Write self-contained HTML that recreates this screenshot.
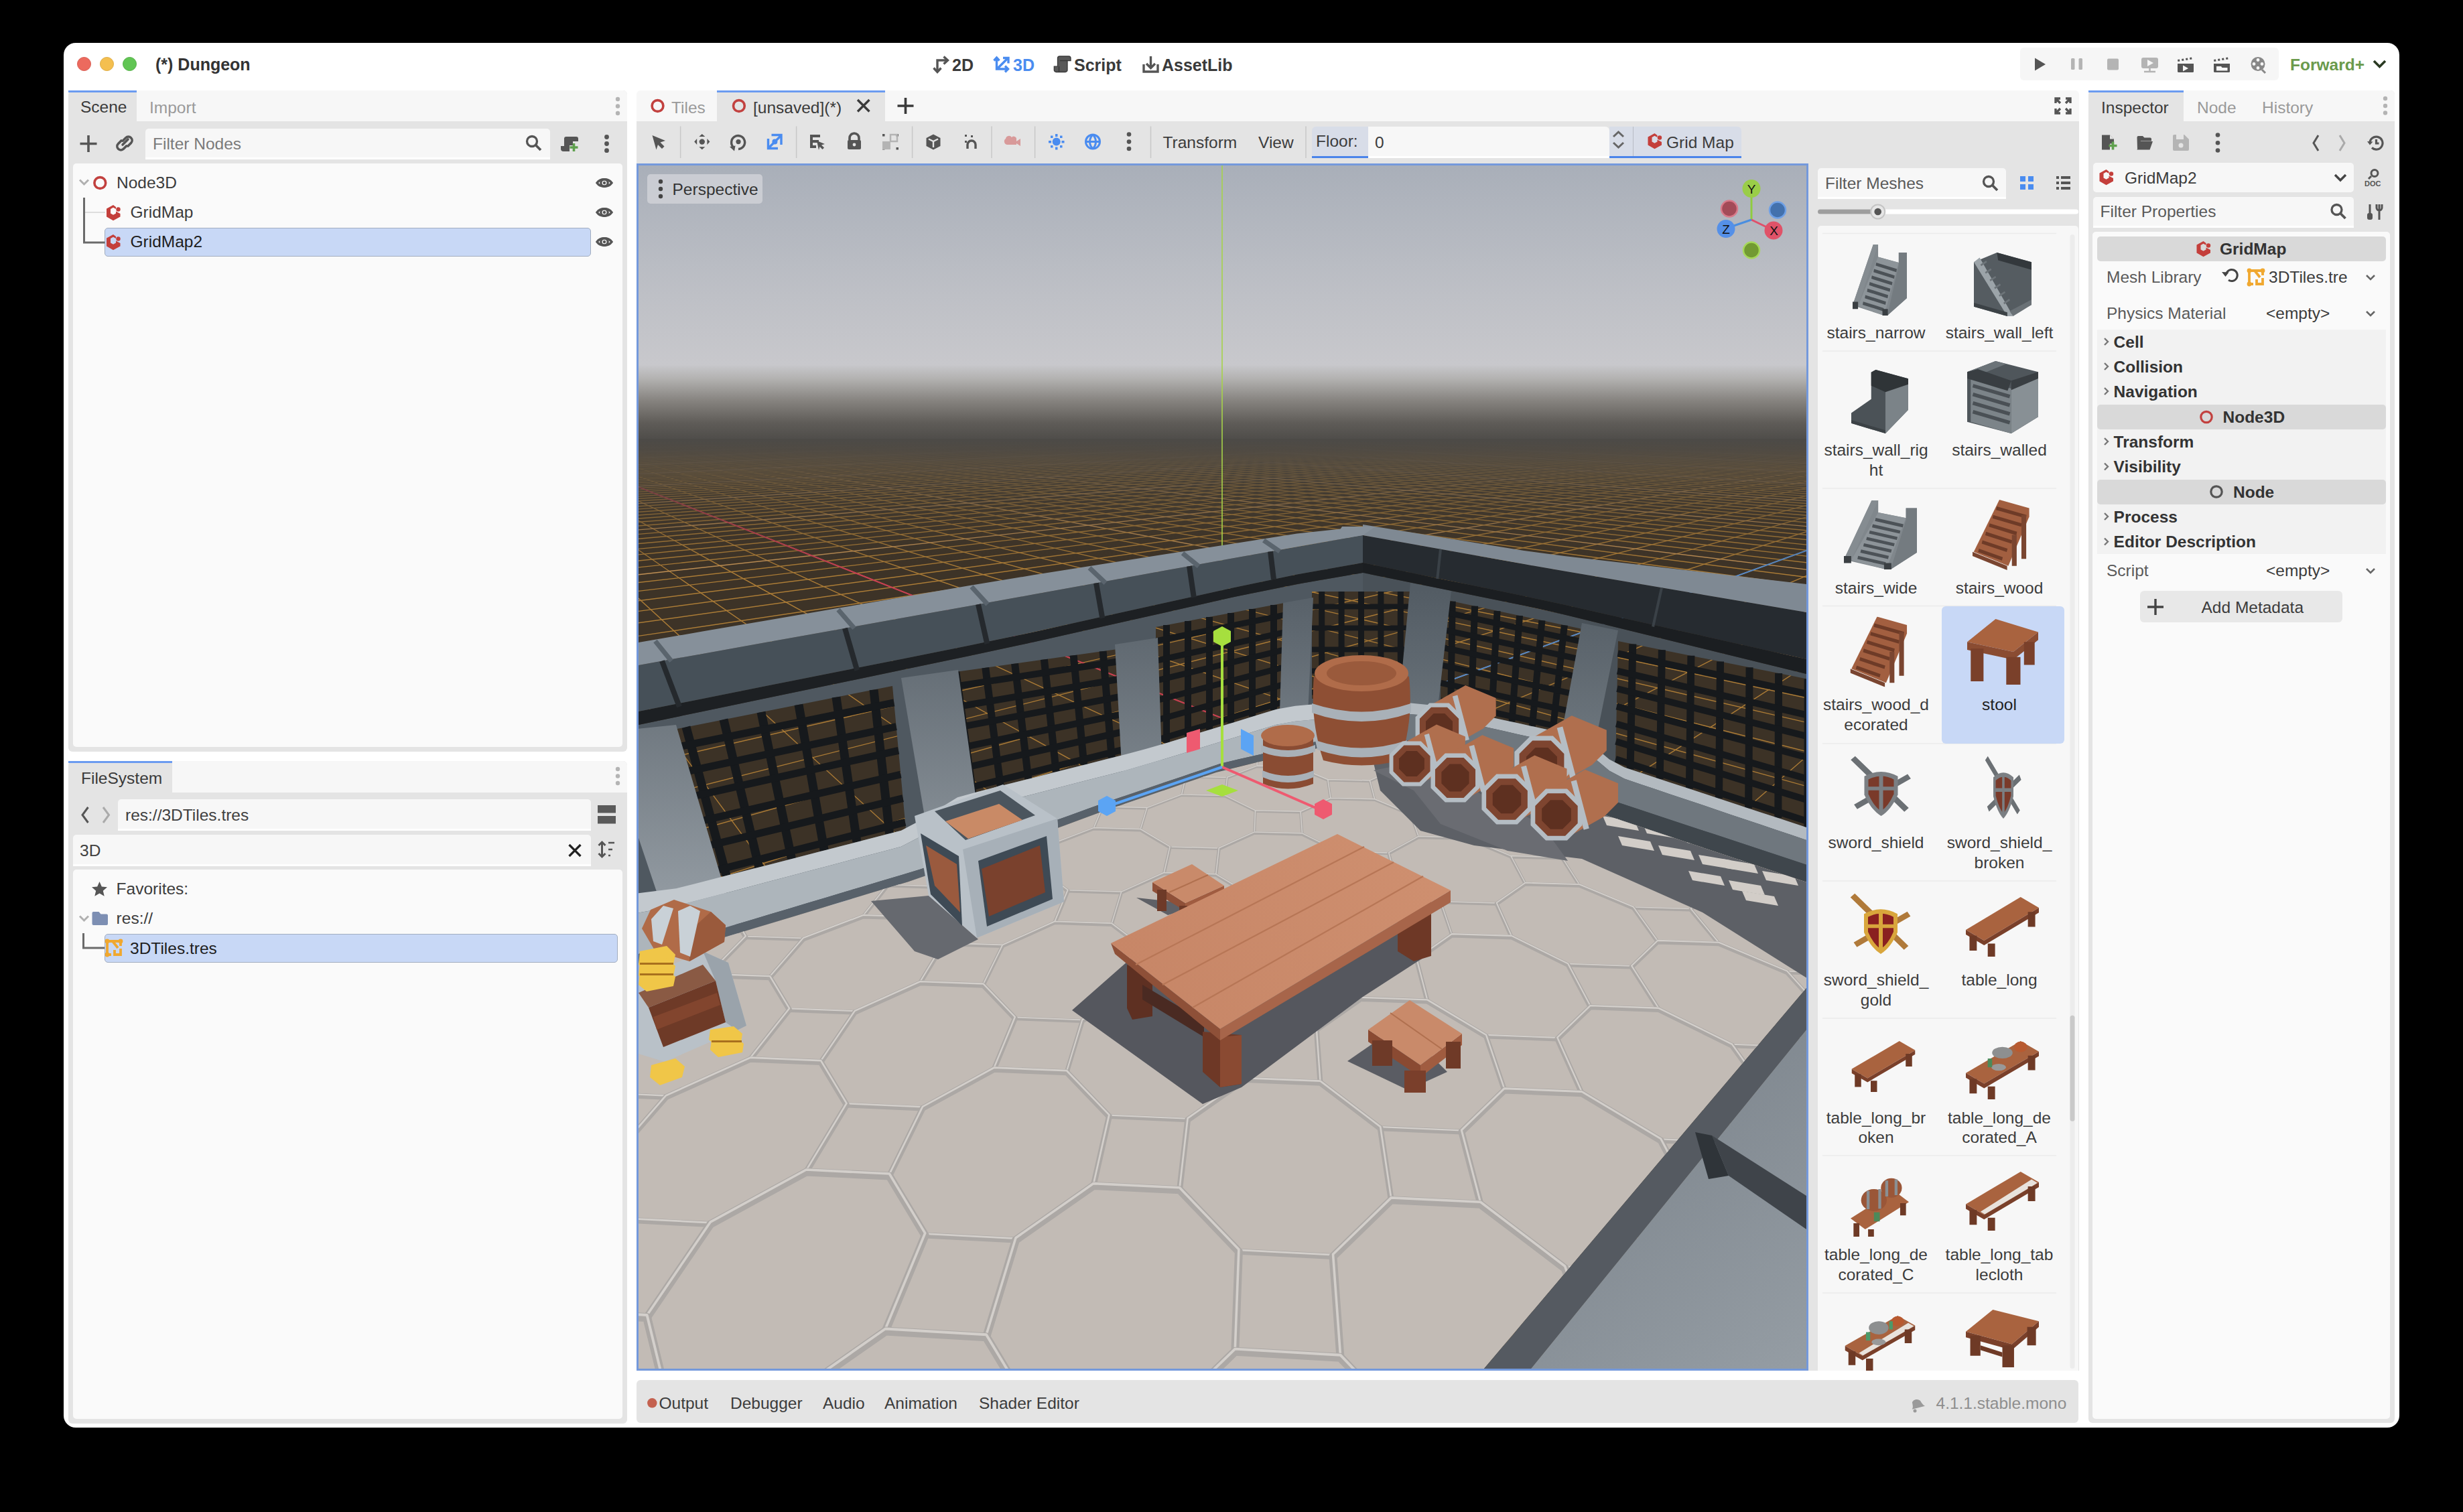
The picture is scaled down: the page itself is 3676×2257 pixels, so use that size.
<!DOCTYPE html>
<html><head><meta charset="utf-8">
<style>
*{box-sizing:border-box;margin:0;padding:0}
html,body{width:3676px;height:2257px;overflow:hidden;background:#000}
body{position:relative;font-family:"Liberation Sans",sans-serif;font-size:24.5px;color:#404040}
.a{position:absolute}
.t{position:absolute;white-space:nowrap;line-height:1}
.b{font-weight:700}
.g{color:#9a9a9a}
svg{position:absolute;overflow:visible}
</style></head><body>
<!-- window -->
<div class="a" style="left:95px;top:64px;width:3486px;height:2067px;background:#fff;border-radius:18px"></div>
<!-- traffic lights -->
<div class="a" style="left:115px;top:84.5px;width:21px;height:21px;border-radius:50%;background:#ec6a5e;border:1px solid #d85a4f"></div>
<div class="a" style="left:149px;top:84.5px;width:21px;height:21px;border-radius:50%;background:#f4bf4f;border:1px solid #deaa3f"></div>
<div class="a" style="left:183px;top:84.5px;width:21px;height:21px;border-radius:50%;background:#61c554;border:1px solid #52b045"></div>
<div class="t b" style="left:232px;top:84px;font-size:25px;color:#333">(*) Dungeon</div>


<!-- title bar center -->
<svg style="left:0;top:0" width="1" height="1">
 <g fill="none" stroke="#555" stroke-width="3.4"><path d="M1399 107V90h14"/><path d="M1393.5 101.5l5.5 6 5.5-6M1408.5 84.5l6 5.5-6 5.5"/></g>
 <g fill="none" stroke="#4a8cf0" stroke-width="3.4"><path d="M1487.5 86v17h17M1488 103l16-16"/><path d="M1483.5 90.5l4-4.5 4 4.5M1500 98.5l4.5 4.5-4.5 4.5M1497 86.5h8v8"/></g>
 <path d="M1583 84h12a3 3 0 0 1 3 3v3.6h-5v13.9a3 3 0 0 1-3 3h-13.7a3 3 0 0 1-3-3v-5.3h5.2V87a3 3 0 0 1 3-3z" fill="#585858" stroke="#383838" stroke-width="1.3"/><path d="M1580.5 99.2v8.3M1582 90.6h10.9" stroke="#383838" stroke-width="1.5"/>
 <g fill="none" stroke="#555" stroke-width="3.4"><path d="M1707 96v11h21V96M1717.5 84v17M1711 95l6.5 6.5 6.5-6.5"/></g>
</svg>
<div class="t b" style="left:1421px;top:85px;font-size:25px;color:#3a3a3a">2D</div>
<div class="t b" style="left:1512px;top:85px;font-size:25px;color:#4a8cf0">3D</div>
<div class="t b" style="left:1603px;top:85px;font-size:25px;color:#3a3a3a">Script</div>
<div class="t b" style="left:1734px;top:85px;font-size:25px;color:#3a3a3a">AssetLib</div>
<!-- run bar -->
<div class="a" style="left:3015px;top:71px;width:386px;height:49px;background:#f6f6f6;border-radius:6px"></div>
<svg style="left:0;top:0" width="1" height="1">
 <path d="M3037 86.5l16 9.5-16 9.5z" fill="#555"/>
 <rect x="3091" y="87" width="5.5" height="17" rx="1.5" fill="#b4b4b4"/><rect x="3102.5" y="87" width="5.5" height="17" rx="1.5" fill="#b4b4b4"/>
 <rect x="3145" y="87.5" width="17" height="17" rx="2" fill="#b4b4b4"/>
 <path d="M3199 86h19a3 3 0 0 1 3 3v10a3 3 0 0 1-3 3h-19a3 3 0 0 1-3-3v-10a3 3 0 0 1 3-3z" fill="#b4b4b4"/><path d="M3205 89l9 5-9 5z" fill="#f6f6f6"/><path d="M3208.5 102v4M3200 107h17" stroke="#b4b4b4" stroke-width="2.5"/>
 <g fill="#555"><path d="M3250 95h24v11.5a1.5 1.5 0 0 1-1.5 1.5h-21a1.5 1.5 0 0 1-1.5-1.5z"/><path d="M3250 89l3-.5.5 3-3 .5zM3256 88l3-.5.5 3-3 .5zM3262 87l3-.5.5 3-3 .5zM3268 86l3-.5.5 3-3 .5z"/></g><path d="M3258 97.5l8 4.5-8 4.5z" fill="#f6f6f6"/>
 <g fill="#555"><path d="M3304 95h24v11.5a1.5 1.5 0 0 1-1.5 1.5h-21a1.5 1.5 0 0 1-1.5-1.5z"/><path d="M3304 89l3-.5.5 3-3 .5zM3310 88l3-.5.5 3-3 .5zM3316 87l3-.5.5 3-3 .5zM3322 86l3-.5.5 3-3 .5z"/></g><path d="M3308 99h7l1.5 2h8v4.5h-16.5z" fill="#f6f6f6"/>
 <circle cx="3370" cy="95.5" r="10.5" fill="#888"/><g fill="#f6f6f6"><circle cx="3370" cy="89.5" r="2.4"/><circle cx="3376" cy="95.5" r="2.4"/><circle cx="3370" cy="101.5" r="2.4"/><circle cx="3364" cy="95.5" r="2.4"/></g><path d="M3376 104l5 5" stroke="#888" stroke-width="3"/>
 <path d="M3543 91l8.5 8.5 8.5-8.5" fill="none" stroke="#2a3a22" stroke-width="3.6"/>
</svg>
<div class="t b" style="left:3418px;top:85px;font-size:24.5px;color:#6a9a4c">Forward+</div>

<!-- ===== LEFT DOCK: Scene ===== -->
<div class="a" style="left:102px;top:135px;width:834px;height:987px;background:#e4e4e4;border-radius:6px"></div>
<div class="a" style="left:204px;top:135px;width:732px;height:46px;background:#f7f7f7;border-radius:0 6px 0 0"></div>
<div class="a" style="left:102px;top:135px;width:102px;height:3px;background:#6b9bf0"></div>
<div class="t" style="left:120px;top:148px;color:#3a3a3a">Scene</div>
<div class="t g" style="left:223px;top:149px">Import</div>
<!-- tree -->
<div class="a" style="left:109px;top:244px;width:820px;height:871px;background:#fafafa;border-radius:5px"></div>
<!-- filter -->
<div class="a" style="left:217px;top:192px;width:604px;height:46px;background:#f7f7f7;border-radius:5px 5px 0 0;border-bottom:3px solid #fff"></div>
<div class="t g" style="left:228px;top:203px;color:#7a7a7a">Filter Nodes</div>

<!-- ===== LEFT DOCK: FileSystem ===== -->
<div class="a" style="left:102px;top:1136px;width:834px;height:989px;background:#e4e4e4;border-radius:6px"></div>
<div class="a" style="left:257px;top:1136px;width:679px;height:47px;background:#f7f7f7;border-radius:0 6px 0 0"></div>
<div class="a" style="left:102px;top:1136px;width:155px;height:3px;background:#6b9bf0"></div>
<div class="t" style="left:121px;top:1150px;color:#3a3a3a">FileSystem</div>
<div class="a" style="left:176px;top:1193px;width:706px;height:47px;background:#f7f7f7;border-radius:5px 5px 0 0;border-bottom:3px solid #fff"></div>
<div class="t" style="left:187px;top:1205px">res://3DTiles.tres</div>
<div class="a" style="left:109px;top:1246px;width:773px;height:47px;background:#f7f7f7;border-radius:5px 5px 0 0;border-bottom:3px solid #fff"></div>
<div class="t" style="left:119px;top:1258px">3D</div>
<div class="a" style="left:109px;top:1298px;width:820px;height:820px;background:#fafafa;border-radius:5px"></div>


<!-- scene toolbar icons -->
<svg style="left:0;top:0" width="1" height="1">
 <g fill="none" stroke="#555" stroke-width="3.6"><path d="M132 202v25M119.5 214.5h25"/></g>
 <g fill="none" stroke="#555" stroke-width="3.6" stroke-linecap="round"><path d="M181 210l-4.5 4.5a5.5 5.5 0 0 0 7.8 7.8l4.5-4.5M191 218l4.5-4.5a5.5 5.5 0 0 0-7.8-7.8l-4.5 4.5M183 216l8-8"/></g>
 <g fill="none" stroke="#555" stroke-width="3.3"><circle cx="794" cy="211" r="7.5"/><path d="M799.5 216.5l7.5 7.5" stroke-width="3.8"/></g>
 <path d="M845 204h15a3 3 0 0 1 3 3v4h-8v6h-5v9h-9a4 4 0 0 1-4-4v-4h5v-11a3 3 0 0 1 3-3z" fill="#555"/>
 <path d="M856.5 214v12M850.5 220h12" stroke="#5fa04e" stroke-width="3.6"/>
 <g fill="#555"><circle cx="905.5" cy="204.5" r="3.4"/><circle cx="905.5" cy="214.5" r="3.4"/><circle cx="905.5" cy="224.7" r="3.4"/></g>
 <g fill="#b4b4b4"><circle cx="922" cy="148" r="3.2"/><circle cx="922" cy="158.5" r="3.2"/><circle cx="922" cy="169" r="3.2"/></g>
</svg>
<!-- tree rows -->
<div class="a" style="left:156px;top:339.5px;width:725.5px;height:43.5px;background:#c8d8f6;border:1px solid #a2adbf;border-radius:5px"></div>
<svg style="left:0;top:0" width="1" height="1">
 <path d="M119 268.5l6.5 6.5 6.5-6.5" fill="none" stroke="#b0b0b0" stroke-width="3"/>
 <circle cx="149.3" cy="273" r="8.4" fill="none" stroke="#c2413f" stroke-width="3.6"/>
 <path d="M125.5 295v67h31" fill="none" stroke="#6a6a6a" stroke-width="3"/>
 <path d="M127 317h30" fill="none" stroke="#dedede" stroke-width="2"/>
 <g id="gm"><path d="M169 306l-10 5.5v12l10 5.8 10.5-5.8v-4.5l-6.5-3.5v3l-4 2.3-4-2.3v-6.5l4-2.3 4 2.3v-3z" fill="#c43f3b"/><circle cx="176.5" cy="312.5" r="3.2" fill="#c43f3b"/></g>
 <use href="#gm" y="44"/>
 <g fill="none" stroke="#555" stroke-width="3.4"><path d="M891 273c5-7 17-7 22 0c-5 7-17 7-22 0z" /><circle cx="902" cy="273" r="5.2"/></g>
 <circle cx="902" cy="273" r="2.2" fill="#555"/>
 <g fill="none" stroke="#555" stroke-width="3.4"><path d="M891 317c5-7 17-7 22 0c-5 7-17 7-22 0z" /><circle cx="902" cy="317" r="5.2"/></g>
 <circle cx="902" cy="317" r="2.2" fill="#555"/>
 <g fill="none" stroke="#555" stroke-width="3.4"><path d="M891 361c5-7 17-7 22 0c-5 7-17 7-22 0z" /><circle cx="902" cy="361" r="5.2"/></g>
 <circle cx="902" cy="361" r="2.2" fill="#555"/>
</svg>
<div class="t" style="left:174px;top:261px;color:#3c3c3c">Node3D</div>
<div class="t" style="left:194.5px;top:305px;color:#3c3c3c">GridMap</div>
<div class="t" style="left:194.5px;top:349px;color:#1e1e1e">GridMap2</div>
<!-- filesystem -->
<svg style="left:0;top:0" width="1" height="1">
 <path d="M131.5 1205l-8.5 11.5 8.5 11.5" fill="none" stroke="#555" stroke-width="3"/>
 <path d="M154 1205l8.5 11.5-8.5 11.5" fill="none" stroke="#aaa" stroke-width="3"/>
 <rect x="892" y="1202" width="27" height="11.5" fill="#5a5a5a"/><rect x="892" y="1218" width="27" height="11.5" fill="#5a5a5a"/>
 <path d="M849.5 1261l17 17M866.5 1261l-17 17" stroke="#222" stroke-width="3.3"/>
 <path d="M898.5 1257v22M893.5 1262l5-5 5 5M893.5 1274l5 5 5-5" fill="none" stroke="#555" stroke-width="3"/>
 <path d="M908 1258h9M908 1268h6M908 1277h3" stroke="#555" stroke-width="2.6"/>
 <path d="M148.5 1316l3.3 7.6 8.2.7-6.2 5.4 1.9 8-7.2-4.3-7.2 4.3 1.9-8-6.2-5.4 8.2-.7z" fill="#555"/>
 <path d="M119 1367.5l6.5 6.5 6.5-6.5" fill="none" stroke="#b0b0b0" stroke-width="3"/>
 <path d="M137.5 1363a2 2 0 0 1 2-2h8l3 3.5h8.5a2 2 0 0 1 2 2v12.5a2 2 0 0 1-2 2h-19.5a2 2 0 0 1-2-2z" fill="#7d8fb3"/>
 <path d="M124.5 1393v22h32" fill="none" stroke="#6a6a6a" stroke-width="3"/>
 <g fill="#922" ></g>
</svg>
<div class="a" style="left:156.4px;top:1393.5px;width:766px;height:43px;background:#c8d8f6;border:1px solid #a2adbf;border-radius:5px"></div>
<svg style="left:0;top:0" width="1" height="1">
 <g id="resicon"><path d="M160 1405h20M160 1405v20M160 1425h6M180 1405v7M168 1405l8 10M171 1418v7h9v-9" fill="none" stroke="#f0a830" stroke-width="3.8"/><circle cx="160" cy="1405" r="3.4" fill="#f0a830"/><circle cx="180" cy="1405" r="3.4" fill="#f0a830"/><circle cx="160" cy="1425" r="3.4" fill="#f0a830"/></g>
 <g fill="#b4b4b4"><circle cx="922" cy="1148" r="3.2"/><circle cx="922" cy="1158.5" r="3.2"/><circle cx="922" cy="1169" r="3.2"/></g>
</svg>
<div class="t" style="left:173.6px;top:1315px;color:#3c3c3c">Favorites:</div>
<div class="t" style="left:173.6px;top:1359px;color:#3c3c3c">res://</div>
<div class="t" style="left:194px;top:1404px;color:#1e1e1e">3DTiles.tres</div>

<!-- ===== CENTER ===== -->
<div class="a" style="left:950px;top:135px;width:2153px;height:46px;background:#f7f7f7;border-radius:6px 6px 0 0"></div>
<div class="a" style="left:1070px;top:135px;width:251px;height:46px;background:#e4e4e4"></div>
<div class="a" style="left:1070px;top:135px;width:251px;height:3px;background:#6b9bf0"></div>
<div class="a" style="left:950px;top:181px;width:2153px;height:63px;background:#e4e4e4"></div>
<div class="t g" style="left:1002px;top:149px">Tiles</div>
<div class="t" style="left:1124px;top:149px;color:#3a3a3a">[unsaved](*)</div>

<!-- center tab icons -->
<svg style="left:0;top:0" width="1" height="1">
 <circle cx="981.5" cy="158" r="8.4" fill="none" stroke="#c2413f" stroke-width="3.6"/>
 <circle cx="1102.9" cy="158" r="8.4" fill="none" stroke="#c2413f" stroke-width="3.6"/>
 <path d="M1280 149l17.5 17.5M1297.5 149l-17.5 17.5" stroke="#3a3a3a" stroke-width="3.4"/>
 <path d="M1351.5 146v24M1339.5 158h24" stroke="#3a3a3a" stroke-width="3.6"/>
 <g fill="none" stroke="#555" stroke-width="3.4"><path d="M3068 154v-7h7M3090 154v-7h-7M3068 162v7h7M3090 162v7h-7M3069 148l6 6M3089 148l-6 6M3069 168l6-6M3089 168l-6-6"/></g>
</svg>
<!-- toolbar -->
<svg style="left:0;top:0" width="1" height="1">
 <g stroke="#c8c8c8" stroke-width="1.5"><path d="M1015.6 188.5v47.5M1188.6 188.5v47.5M1361.6 188.5v47.5M1480 188.5v47.5M1544.6 188.5v47.5M1717.5 188.5v47.5M1949 188.5v47.5"/></g>
 <path d="M973.5 202l19.5 8-7.5 2.5 6 6-3.5 3.5-6-6-2.5 7.5z" fill="#555"/>
 <g fill="#555"><circle cx="1047.8" cy="211.6" r="4.2"/><path d="M1047.8 200l-4.5 4h9zM1047.8 223.2l-4.5-4h9zM1036.2 211.6l4-4.5v9zM1059.4 211.6l-4-4.5v9z"/></g>
 <g fill="none" stroke="#555" stroke-width="3.4"><path d="M1095 220a10 10 0 1 1 7 2.5"/></g><circle cx="1102" cy="211.6" r="3.6" fill="#555"/><path d="M1089 219l7 6.5 1.5-8z" fill="#555"/>
 <g stroke="#4a8cf0" stroke-width="3.4" fill="none"><path d="M1146.5 207v14.5h14.5M1166 216v-14.5h-14.5M1147 221l19-19"/></g><circle cx="1156.4" cy="211.6" r="4" fill="#4a8cf0"/>
 <path d="M1209 201h15v4h-11v4h9v4h-9v4h5v4h-9z" fill="#555"/><path d="M1219 210l12 5-5 1.5 4 4-2.5 2.5-4-4-1.5 5z" fill="#555"/>
 <path d="M1268 209v-3a7 7 0 0 1 14 0v3" fill="none" stroke="#555" stroke-width="3.6"/><rect x="1265" y="209" width="20" height="14" rx="2" fill="#555"/><circle cx="1275" cy="216" r="2.4" fill="#e4e4e4"/>
 <g fill="#555"><rect x="1317" y="200" width="3.5" height="3.5"/><rect x="1337.5" y="200" width="3.5" height="3.5"/><rect x="1317" y="220" width="3.5" height="3.5"/><rect x="1337.5" y="220" width="3.5" height="3.5"/></g><rect x="1317" y="211" width="12" height="12" fill="#b4b4b4"/><path d="M1329 211v-10h10v10h-10" fill="none" stroke="#b4b4b4" stroke-width="2.5"/>
 <path d="M1393 200.5l10.5 5.5v12l-10.5 5.5-10.5-5.5v-12z" fill="#555"/><path d="M1386 207.5l7 3.5 7-3.5" fill="none" stroke="#e4e4e4" stroke-width="2.4"/><path d="M1393 211v9" stroke="#e4e4e4" stroke-width="2.4"/>
 <path d="M1444 222v-6a6 6 0 0 1 12 0v6" fill="none" stroke="#555" stroke-width="3.4"/><rect x="1440" y="201" width="3" height="3" fill="#555"/><rect x="1449" y="202" width="3" height="3" fill="#555"/><rect x="1440" y="210" width="3" height="3" fill="#555"/>
 <path d="M1501 207a5 5 0 0 1 9-2 4 4 0 0 1 7 3v8h-14a5 5 0 0 1-2-9z" fill="#d89a9a"/><path d="M1517 211l6-4v11l-6-4z" fill="#d89a9a"/>
 <g fill="#4a8cf0"><circle cx="1576.7" cy="211.6" r="6"/><rect x="1575" y="200" width="3.5" height="4"/><rect x="1575" y="219.5" width="3.5" height="4"/><rect x="1565" y="210" width="4" height="3.5"/><rect x="1584.5" y="210" width="4" height="3.5"/><rect x="1568" y="202.5" width="3.5" height="3.5"/><rect x="1582" y="202.5" width="3.5" height="3.5"/><rect x="1568" y="217" width="3.5" height="3.5"/><rect x="1582" y="217" width="3.5" height="3.5"/></g>
 <g fill="none" stroke="#4a8cf0" stroke-width="3"><circle cx="1631" cy="211.6" r="10.5"/><path d="M1620.5 211.6h21M1631 201c-6 6-6 15 0 21M1631 201c6 6 6 15 0 21"/></g>
 <g fill="#555"><circle cx="1685" cy="200.5" r="3.3"/><circle cx="1685" cy="211.6" r="3.3"/><circle cx="1685" cy="222" r="3.3"/></g>
</svg>
<div class="t" style="left:1735.5px;top:200.5px;color:#3c3c3c">Transform</div>
<div class="t" style="left:1878px;top:200.5px;color:#3c3c3c">View</div>
<div class="a" style="left:1957.5px;top:188.5px;width:85px;height:47.5px;background:#d8dde8;border-bottom:3px solid #4a84ea;border-radius:6px 0 0 0"></div>
<div class="t" style="left:1964px;top:199px;color:#3c3c3c">Floor:</div>
<div class="a" style="left:2042px;top:188.5px;width:360px;height:47.5px;background:#f7f7f7;border-bottom:3px solid #fff;border-radius:0 6px 0 0"></div>
<div class="t" style="left:2052px;top:200.5px;color:#3c3c3c">0</div>
<div class="a" style="left:2401.5px;top:188.5px;width:197.5px;height:47.5px;background:#d8dde8;border-bottom:3px solid #4a84ea;border-radius:0 6px 0 0"></div>
<div class="a" style="left:2436.5px;top:188.5px;width:1.5px;height:44.5px;background:#b8bcc4"></div>
<svg style="left:0;top:0" width="1" height="1">
 <path d="M2408 204l7.5-7 7.5 7M2408 213l7.5 7 7.5-7" fill="none" stroke="#666" stroke-width="3"/>
 <g><path d="M2469.5 199l-10 5.5v12l10 5.8 10.5-5.8v-4.5l-6.5-3.5v3l-4 2.3-4-2.3v-6.5l4-2.3 4 2.3v-3z" fill="#c43f3b"/><circle cx="2477" cy="205.5" r="3.2" fill="#c43f3b"/></g>
</svg>
<div class="t" style="left:2487px;top:200.5px;color:#3c3c3c">Grid Map</div>

<!-- viewport -->
<!--VP-->
<svg style="left:0;top:0" width="3676" height="2257" viewBox="0 0 3676 2257">
<defs><clipPath id="vpc"><rect x="953" y="247" width="1743" height="1796"/></clipPath>
<clipPath id="gridclip"><rect x="900" y="656" width="1900" height="1500"/></clipPath>
<clipPath id="holes"><polygon points="940.0,1102.0 1332.0,1024.0 1352.0,1238.0 1011.0,1326.0"/><polygon points="1405.0,1006.0 1668.0,969.0 1680.0,1126.0 1431.0,1189.0"/><polygon points="1725.0,936.0 1917.0,900.0 1917.0,1055.0 1725.0,1114.0"/><polygon points="1958.0,883.0 2105.0,883.0 2105.0,1043.0 1958.0,1043.0"/><polygon points="2151.0,894.0 2385.0,944.0 2363.0,1101.0 2150.0,1054.0"/><polygon points="2415.0,957.0 2720.0,1018.0 2720.0,1243.0 2411.0,1141.0"/></clipPath>
<linearGradient id="sky" x1="0" y1="247" x2="0" y2="660" gradientUnits="userSpaceOnUse">
<stop offset="0" stop-color="#a9afb9"/><stop offset="0.35" stop-color="#b9bcc3"/><stop offset="0.72" stop-color="#c8c8cc"/><stop offset="0.77" stop-color="#b3b2b1"/>
<stop offset="0.85" stop-color="#86837f"/><stop offset="0.93" stop-color="#5f5c58"/><stop offset="1" stop-color="#4c4a47"/></linearGradient>
<linearGradient id="fog" x1="0" y1="655" x2="0" y2="860" gradientUnits="userSpaceOnUse">
<stop offset="0" stop-color="#4c4a47" stop-opacity="1"/><stop offset="0.08" stop-color="#4b4844" stop-opacity="0.95"/><stop offset="0.3" stop-color="#48433c" stop-opacity="0.7"/><stop offset="0.65" stop-color="#433b31" stop-opacity="0.3"/><stop offset="1" stop-color="#3d3327" stop-opacity="0"/></linearGradient>
<linearGradient id="lowgray" x1="2300" y1="1500" x2="2700" y2="2043" gradientUnits="userSpaceOnUse"><stop offset="0" stop-color="#767e86"/><stop offset="1" stop-color="#959da4"/></linearGradient>
<linearGradient id="tabletop" x1="1660" y1="1530" x2="2163" y2="1244" gradientUnits="userSpaceOnUse"><stop offset="0" stop-color="#c68566"/><stop offset="1" stop-color="#cf9070"/></linearGradient>
</defs>
<g clip-path="url(#vpc)">
<rect x="953" y="247" width="1743" height="1796" fill="#3d3327"/>
<rect x="953" y="247" width="1743" height="413" fill="url(#sky)"/>
<g id="grid" stroke-width="1.4" opacity="0.85" clip-path="url(#gridclip)"><line x1="553.0" y1="391.3" x2="4126.6" y2="662.1" stroke="#dba35e"/><line x1="3388.3" y1="365.9" x2="11.3" y2="652.5" stroke="#dba35e"/><line x1="550.5" y1="384.6" x2="4094.5" y2="661.5" stroke="#c08a3a"/><line x1="3391.0" y1="358.3" x2="34.4" y2="652.2" stroke="#c08a3a"/><line x1="547.8" y1="377.4" x2="4062.9" y2="660.9" stroke="#c08a3a"/><line x1="3393.9" y1="350.3" x2="57.1" y2="651.8" stroke="#c08a3a"/><line x1="544.9" y1="369.8" x2="4032.0" y2="660.4" stroke="#c08a3a"/><line x1="3396.9" y1="341.6" x2="79.5" y2="651.4" stroke="#c08a3a"/><line x1="541.8" y1="361.7" x2="4001.6" y2="659.8" stroke="#c08a3a"/><line x1="3400.2" y1="332.4" x2="101.7" y2="651.1" stroke="#c08a3a"/><line x1="538.5" y1="352.9" x2="3971.7" y2="659.3" stroke="#c08a3a"/><line x1="3403.7" y1="322.5" x2="123.5" y2="650.7" stroke="#c08a3a"/><line x1="534.9" y1="343.4" x2="3942.4" y2="658.8" stroke="#c08a3a"/><line x1="3407.5" y1="311.8" x2="145.0" y2="650.4" stroke="#c08a3a"/><line x1="531.1" y1="333.3" x2="3913.5" y2="658.3" stroke="#c08a3a"/><line x1="3411.6" y1="300.2" x2="166.2" y2="650.0" stroke="#c08a3a"/><line x1="526.9" y1="322.2" x2="3885.2" y2="657.8" stroke="#dba35e"/><line x1="3416.0" y1="287.7" x2="187.1" y2="649.7" stroke="#dba35e"/><line x1="522.3" y1="310.2" x2="3857.4" y2="657.3" stroke="#c08a3a"/><line x1="3420.8" y1="274.1" x2="207.8" y2="649.4" stroke="#c08a3a"/><line x1="517.4" y1="297.2" x2="3830.0" y2="656.8" stroke="#c08a3a"/><line x1="3426.1" y1="259.3" x2="228.2" y2="649.1" stroke="#c08a3a"/><line x1="512.0" y1="282.9" x2="3803.1" y2="656.3" stroke="#c08a3a"/><line x1="3431.8" y1="243.0" x2="248.3" y2="648.7" stroke="#c08a3a"/><line x1="506.0" y1="267.1" x2="3776.6" y2="655.8" stroke="#c08a3a"/><line x1="3438.2" y1="225.2" x2="268.2" y2="648.4" stroke="#c08a3a"/><line x1="499.4" y1="249.8" x2="3750.6" y2="655.4" stroke="#c08a3a"/><line x1="3445.2" y1="205.4" x2="287.8" y2="648.1" stroke="#c08a3a"/><line x1="492.1" y1="230.5" x2="3725.0" y2="654.9" stroke="#c08a3a"/><line x1="3452.9" y1="183.4" x2="307.2" y2="647.8" stroke="#c08a3a"/><line x1="484.0" y1="209.0" x2="3699.8" y2="654.5" stroke="#c08a3a"/><line x1="3461.6" y1="158.9" x2="326.3" y2="647.5" stroke="#c08a3a"/><line x1="474.8" y1="184.8" x2="3675.0" y2="654.0" stroke="#dba35e"/><line x1="3471.4" y1="131.2" x2="345.1" y2="647.2" stroke="#dba35e"/><line x1="464.5" y1="157.4" x2="3650.6" y2="653.6" stroke="#c08a3a"/><line x1="3482.5" y1="99.9" x2="363.8" y2="646.9" stroke="#c08a3a"/><line x1="452.6" y1="126.2" x2="3626.6" y2="653.2" stroke="#c08a3a"/><line x1="3495.2" y1="64.0" x2="382.2" y2="646.6" stroke="#c08a3a"/><line x1="439.0" y1="90.2" x2="3603.0" y2="652.7" stroke="#c08a3a"/><line x1="3509.8" y1="22.7" x2="400.3" y2="646.3" stroke="#c08a3a"/><line x1="423.2" y1="48.3" x2="3579.8" y2="652.3" stroke="#c08a3a"/><line x1="3526.9" y1="-25.6" x2="418.3" y2="646.0" stroke="#c08a3a"/><line x1="404.4" y1="-1.1" x2="3556.9" y2="651.9" stroke="#c08a3a"/><line x1="3547.1" y1="-82.8" x2="436.0" y2="645.7" stroke="#c08a3a"/><line x1="382.1" y1="-60.3" x2="3534.4" y2="651.5" stroke="#c08a3a"/><line x1="3571.4" y1="-151.3" x2="453.5" y2="645.5" stroke="#c08a3a"/><line x1="354.8" y1="-132.3" x2="3512.2" y2="651.1" stroke="#c08a3a"/><line x1="3601.1" y1="-235.3" x2="470.8" y2="645.2" stroke="#c08a3a"/><line x1="320.8" y1="-222.0" x2="3490.3" y2="650.7" stroke="#dba35e"/><line x1="3638.3" y1="-340.3" x2="487.9" y2="644.9" stroke="#dba35e"/><line x1="277.4" y1="-336.8" x2="3468.8" y2="650.3" stroke="#c08a3a"/><line x1="3686.2" y1="-475.5" x2="504.8" y2="644.6" stroke="#c08a3a"/><line x1="219.8" y1="-488.8" x2="3447.6" y2="650.0" stroke="#c08a3a"/><line x1="3750.1" y1="-656.2" x2="521.5" y2="644.4" stroke="#c08a3a"/><line x1="140.0" y1="-699.7" x2="3426.7" y2="649.6" stroke="#c08a3a"/><line x1="3839.9" y1="-909.9" x2="537.9" y2="644.1" stroke="#c08a3a"/><line x1="21.7" y1="-1011.9" x2="3406.2" y2="649.2" stroke="#c08a3a"/><line x1="3975.2" y1="-1291.9" x2="554.2" y2="643.8" stroke="#c08a3a"/><line x1="-171.3" y1="-1521.6" x2="3385.9" y2="648.9" stroke="#c08a3a"/><line x1="4202.0" y1="-1932.9" x2="570.3" y2="643.6" stroke="#c08a3a"/><line x1="-542.8" y1="-2502.9" x2="3365.9" y2="648.5" stroke="#c08a3a"/><line x1="4661.4" y1="-3230.6" x2="586.2" y2="643.3" stroke="#c08a3a"/><line x1="-1553.9" y1="-5173.4" x2="3346.2" y2="648.2" stroke="#c08a3a"/><line x1="6086.3" y1="-7256.0" x2="602.0" y2="643.1" stroke="#c08a3a"/><line x1="-15054.7" y1="-40830.5" x2="3326.8" y2="647.8" stroke="#dba35e"/><line x1="-51346.9" y1="154998.8" x2="617.5" y2="642.8" stroke="#dba35e"/><line x1="3662.5" y1="8603.7" x2="3307.7" y2="647.5" stroke="#c08a3a"/><line x1="781.6" y1="7730.1" x2="632.9" y2="642.6" stroke="#c08a3a"/><line x1="2013.8" y1="4249.2" x2="3288.8" y2="647.1" stroke="#c08a3a"/><line x1="2013.8" y1="4249.2" x2="648.1" y2="642.3" stroke="#c08a3a"/><line x1="1526.9" y1="2963.4" x2="3270.2" y2="646.8" stroke="#c08a3a"/><line x1="2437.5" y1="3052.1" x2="663.1" y2="642.1" stroke="#c08a3a"/><line x1="1293.7" y1="2347.6" x2="3251.8" y2="646.5" stroke="#c08a3a"/><line x1="2651.9" y1="2446.4" x2="678.0" y2="641.9" stroke="#c08a3a"/><line x1="1157.0" y1="1986.3" x2="3233.8" y2="646.2" stroke="#c08a3a"/><line x1="2781.4" y1="2080.6" x2="692.6" y2="641.6" stroke="#c08a3a"/><line x1="1067.0" y1="1748.8" x2="3215.9" y2="645.8" stroke="#c08a3a"/><line x1="2868.0" y1="1835.8" x2="707.2" y2="641.4" stroke="#c08a3a"/><line x1="1003.4" y1="1580.8" x2="3198.3" y2="645.5" stroke="#c08a3a"/><line x1="2930.1" y1="1660.4" x2="721.5" y2="641.2" stroke="#c08a3a"/><line x1="956.0" y1="1455.7" x2="3181.0" y2="645.2" stroke="#dba35e"/><line x1="2976.8" y1="1528.7" x2="735.7" y2="640.9" stroke="#dba35e"/><line x1="919.4" y1="1358.8" x2="3163.8" y2="644.9" stroke="#c08a3a"/><line x1="3013.1" y1="1426.0" x2="749.8" y2="640.7" stroke="#c08a3a"/><line x1="890.2" y1="1281.7" x2="3146.9" y2="644.6" stroke="#c08a3a"/><line x1="3042.2" y1="1343.8" x2="763.7" y2="640.5" stroke="#c08a3a"/><line x1="866.3" y1="1218.8" x2="3130.2" y2="644.3" stroke="#c08a3a"/><line x1="3066.0" y1="1276.5" x2="777.4" y2="640.3" stroke="#c08a3a"/><line x1="846.5" y1="1166.5" x2="3113.8" y2="644.0" stroke="#c08a3a"/><line x1="3085.9" y1="1220.3" x2="791.0" y2="640.1" stroke="#c08a3a"/><line x1="829.8" y1="1122.3" x2="3097.6" y2="643.7" stroke="#c08a3a"/><line x1="3102.7" y1="1172.7" x2="804.5" y2="639.8" stroke="#c08a3a"/><line x1="815.5" y1="1084.6" x2="3081.5" y2="643.5" stroke="#c08a3a"/><line x1="3117.2" y1="1132.0" x2="817.8" y2="639.6" stroke="#c08a3a"/><line x1="803.2" y1="1051.9" x2="3065.7" y2="643.2" stroke="#c08a3a"/><line x1="3129.7" y1="1096.6" x2="831.0" y2="639.4" stroke="#c08a3a"/><line x1="792.4" y1="1023.4" x2="3050.1" y2="642.9" stroke="#dba35e"/><line x1="3140.6" y1="1065.7" x2="844.0" y2="639.2" stroke="#dba35e"/><line x1="782.8" y1="998.2" x2="3034.7" y2="642.6" stroke="#c08a3a"/><line x1="3150.3" y1="1038.3" x2="856.9" y2="639.0" stroke="#c08a3a"/><line x1="774.4" y1="975.9" x2="3019.4" y2="642.3" stroke="#c08a3a"/><line x1="3158.9" y1="1014.0" x2="869.7" y2="638.8" stroke="#c08a3a"/><line x1="766.8" y1="955.9" x2="3004.4" y2="642.1" stroke="#c08a3a"/><line x1="3166.6" y1="992.3" x2="882.3" y2="638.6" stroke="#c08a3a"/><line x1="760.0" y1="938.0" x2="2989.6" y2="641.8" stroke="#c08a3a"/><line x1="3173.5" y1="972.7" x2="894.8" y2="638.4" stroke="#c08a3a"/><line x1="753.9" y1="921.8" x2="2974.9" y2="641.6" stroke="#c08a3a"/><line x1="3179.8" y1="955.0" x2="907.1" y2="638.2" stroke="#c08a3a"/><line x1="748.3" y1="907.0" x2="2960.4" y2="641.3" stroke="#c08a3a"/><line x1="3185.5" y1="938.9" x2="919.4" y2="638.0" stroke="#c08a3a"/><line x1="743.2" y1="893.6" x2="2946.1" y2="641.0" stroke="#c08a3a"/><line x1="3190.7" y1="924.2" x2="931.5" y2="637.8" stroke="#c08a3a"/><line x1="738.5" y1="881.2" x2="2932.0" y2="640.8" stroke="#dba35e"/><line x1="3195.5" y1="910.7" x2="943.5" y2="637.6" stroke="#dba35e"/><line x1="734.2" y1="869.9" x2="2918.0" y2="640.5" stroke="#c08a3a"/><line x1="3199.9" y1="898.3" x2="955.4" y2="637.4" stroke="#c08a3a"/><line x1="730.3" y1="859.5" x2="2904.3" y2="640.3" stroke="#c08a3a"/><line x1="3203.9" y1="886.8" x2="967.1" y2="637.2" stroke="#c08a3a"/><line x1="726.6" y1="849.8" x2="2890.6" y2="640.1" stroke="#c08a3a"/><line x1="3207.7" y1="876.2" x2="978.8" y2="637.1" stroke="#c08a3a"/><line x1="723.2" y1="840.8" x2="2877.2" y2="639.8" stroke="#c08a3a"/><line x1="3211.2" y1="866.4" x2="990.3" y2="636.9" stroke="#c08a3a"/><line x1="720.1" y1="832.5" x2="2863.9" y2="639.6" stroke="#c08a3a"/><line x1="3214.4" y1="857.2" x2="1001.7" y2="636.7" stroke="#c08a3a"/><line x1="717.1" y1="824.7" x2="2850.7" y2="639.3" stroke="#c08a3a"/><line x1="3217.5" y1="848.6" x2="1013.0" y2="636.5" stroke="#c08a3a"/><line x1="714.3" y1="817.4" x2="2837.7" y2="639.1" stroke="#c08a3a"/><line x1="3220.3" y1="840.6" x2="1024.2" y2="636.3" stroke="#c08a3a"/><line x1="711.8" y1="810.5" x2="2824.9" y2="638.9" stroke="#dba35e"/><line x1="3223.0" y1="833.1" x2="1035.3" y2="636.2" stroke="#dba35e"/><line x1="709.3" y1="804.1" x2="2812.2" y2="638.7" stroke="#c08a3a"/><line x1="3225.5" y1="826.0" x2="1046.3" y2="636.0" stroke="#c08a3a"/><line x1="707.0" y1="798.1" x2="2799.7" y2="638.4" stroke="#c08a3a"/><line x1="3227.8" y1="819.4" x2="1057.1" y2="635.8" stroke="#c08a3a"/><line x1="704.9" y1="792.4" x2="2787.3" y2="638.2" stroke="#c08a3a"/><line x1="3230.0" y1="813.1" x2="1067.9" y2="635.6" stroke="#c08a3a"/><line x1="702.9" y1="787.0" x2="2775.0" y2="638.0" stroke="#c08a3a"/><line x1="3232.1" y1="807.2" x2="1078.5" y2="635.5" stroke="#c08a3a"/><line x1="700.9" y1="781.9" x2="2762.9" y2="637.8" stroke="#c08a3a"/><line x1="3234.1" y1="801.6" x2="1089.1" y2="635.3" stroke="#c08a3a"/><line x1="699.1" y1="777.1" x2="2750.9" y2="637.6" stroke="#c08a3a"/><line x1="3236.0" y1="796.3" x2="1099.6" y2="635.1" stroke="#c08a3a"/><line x1="697.4" y1="772.6" x2="2739.1" y2="637.4" stroke="#c08a3a"/><line x1="3237.8" y1="791.3" x2="1109.9" y2="635.0" stroke="#c08a3a"/><line x1="695.7" y1="768.2" x2="2727.3" y2="637.1" stroke="#dba35e"/><line x1="3239.5" y1="786.5" x2="1120.2" y2="634.8" stroke="#dba35e"/><line x1="694.2" y1="764.1" x2="2715.8" y2="636.9" stroke="#c08a3a"/><line x1="3241.1" y1="782.0" x2="1130.4" y2="634.6" stroke="#c08a3a"/><line x1="692.7" y1="760.2" x2="2704.3" y2="636.7" stroke="#c08a3a"/><line x1="3242.6" y1="777.6" x2="1140.4" y2="634.5" stroke="#c08a3a"/><line x1="691.3" y1="756.4" x2="2693.0" y2="636.5" stroke="#c08a3a"/><line x1="3244.1" y1="773.5" x2="1150.4" y2="634.3" stroke="#c08a3a"/><line x1="689.9" y1="752.9" x2="2681.8" y2="636.3" stroke="#c08a3a"/><line x1="3245.5" y1="769.6" x2="1160.3" y2="634.2" stroke="#c08a3a"/><line x1="688.6" y1="749.4" x2="2670.7" y2="636.1" stroke="#c08a3a"/><line x1="3246.8" y1="765.8" x2="1170.1" y2="634.0" stroke="#c08a3a"/><line x1="687.4" y1="746.2" x2="2659.7" y2="635.9" stroke="#c08a3a"/><line x1="3248.1" y1="762.2" x2="1179.8" y2="633.8" stroke="#c08a3a"/><line x1="686.2" y1="743.1" x2="2648.8" y2="635.7" stroke="#c08a3a"/><line x1="3249.3" y1="758.7" x2="1189.4" y2="633.7" stroke="#c08a3a"/><line x1="685.1" y1="740.1" x2="2638.1" y2="635.6" stroke="#dba35e"/><line x1="3250.5" y1="755.4" x2="1199.0" y2="633.5" stroke="#dba35e"/><line x1="684.0" y1="737.2" x2="2627.5" y2="635.4" stroke="#c08a3a"/><line x1="3251.6" y1="752.3" x2="1208.4" y2="633.4" stroke="#c08a3a"/><line x1="683.0" y1="734.4" x2="2617.0" y2="635.2" stroke="#c08a3a"/><line x1="3252.7" y1="749.2" x2="1217.8" y2="633.2" stroke="#c08a3a"/><line x1="681.9" y1="731.8" x2="2606.6" y2="635.0" stroke="#c08a3a"/><line x1="3253.7" y1="746.3" x2="1227.1" y2="633.1" stroke="#c08a3a"/><line x1="681.0" y1="729.2" x2="2596.3" y2="634.8" stroke="#c08a3a"/><line x1="3254.7" y1="743.5" x2="1236.3" y2="632.9" stroke="#c08a3a"/><line x1="680.1" y1="726.8" x2="2586.1" y2="634.6" stroke="#c08a3a"/><line x1="3255.7" y1="740.8" x2="1245.4" y2="632.8" stroke="#c08a3a"/><line x1="679.2" y1="724.4" x2="2576.0" y2="634.5" stroke="#c08a3a"/><line x1="3256.6" y1="738.2" x2="1254.4" y2="632.6" stroke="#c08a3a"/><line x1="678.3" y1="722.2" x2="2566.0" y2="634.3" stroke="#c08a3a"/><line x1="3257.5" y1="735.6" x2="1263.4" y2="632.5" stroke="#c08a3a"/><line x1="677.5" y1="720.0" x2="2556.1" y2="634.1" stroke="#dba35e"/><line x1="3258.3" y1="733.2" x2="1272.3" y2="632.4" stroke="#dba35e"/><line x1="676.7" y1="717.9" x2="2546.4" y2="633.9" stroke="#c08a3a"/><line x1="3259.1" y1="730.9" x2="1281.1" y2="632.2" stroke="#c08a3a"/><line x1="675.9" y1="715.8" x2="2536.7" y2="633.8" stroke="#c08a3a"/><line x1="3259.9" y1="728.6" x2="1289.8" y2="632.1" stroke="#c08a3a"/><line x1="675.2" y1="713.9" x2="2527.1" y2="633.6" stroke="#c08a3a"/><line x1="3260.7" y1="726.4" x2="1298.5" y2="631.9" stroke="#c08a3a"/><line x1="674.4" y1="711.9" x2="2517.6" y2="633.4" stroke="#c08a3a"/><line x1="3261.5" y1="724.3" x2="1307.1" y2="631.8" stroke="#c08a3a"/><line x1="673.7" y1="710.1" x2="2508.2" y2="633.2" stroke="#c08a3a"/><line x1="3262.2" y1="722.3" x2="1315.6" y2="631.7" stroke="#c08a3a"/><line x1="673.1" y1="708.3" x2="2498.9" y2="633.1" stroke="#c08a3a"/><line x1="3262.9" y1="720.3" x2="1324.0" y2="631.5" stroke="#c08a3a"/><line x1="672.4" y1="706.6" x2="2489.7" y2="632.9" stroke="#c08a3a"/><line x1="3263.6" y1="718.4" x2="1332.4" y2="631.4" stroke="#c08a3a"/><line x1="671.8" y1="704.9" x2="2480.6" y2="632.8" stroke="#dba35e"/><line x1="3264.2" y1="716.6" x2="1340.7" y2="631.3" stroke="#dba35e"/><line x1="671.2" y1="703.3" x2="2471.6" y2="632.6" stroke="#c08a3a"/><line x1="3264.9" y1="714.8" x2="1348.9" y2="631.1" stroke="#c08a3a"/><line x1="670.6" y1="701.7" x2="2462.7" y2="632.4" stroke="#c08a3a"/><line x1="3265.5" y1="713.0" x2="1357.0" y2="631.0" stroke="#c08a3a"/><line x1="670.0" y1="700.2" x2="2453.8" y2="632.3" stroke="#c08a3a"/><line x1="3266.1" y1="711.3" x2="1365.1" y2="630.9" stroke="#c08a3a"/><line x1="669.4" y1="698.7" x2="2445.0" y2="632.1" stroke="#c08a3a"/><line x1="3266.6" y1="709.7" x2="1373.1" y2="630.7" stroke="#c08a3a"/><line x1="668.9" y1="697.3" x2="2436.4" y2="632.0" stroke="#c08a3a"/><line x1="3267.2" y1="708.1" x2="1381.1" y2="630.6" stroke="#c08a3a"/><line x1="668.4" y1="695.9" x2="2427.8" y2="631.8" stroke="#c08a3a"/><line x1="3267.8" y1="706.6" x2="1389.0" y2="630.5" stroke="#c08a3a"/><line x1="667.8" y1="694.5" x2="2419.2" y2="631.7" stroke="#c08a3a"/><line x1="3268.3" y1="705.1" x2="1396.8" y2="630.4" stroke="#c08a3a"/><line x1="667.3" y1="693.2" x2="2410.8" y2="631.5" stroke="#dba35e"/><line x1="3268.8" y1="703.6" x2="1404.6" y2="630.2" stroke="#dba35e"/><line x1="666.9" y1="691.9" x2="2402.4" y2="631.4" stroke="#c08a3a"/><line x1="3269.3" y1="702.2" x2="1412.3" y2="630.1" stroke="#c08a3a"/><line x1="666.4" y1="690.7" x2="2394.2" y2="631.2" stroke="#c08a3a"/><line x1="3269.8" y1="700.8" x2="1419.9" y2="630.0" stroke="#c08a3a"/><line x1="665.9" y1="689.5" x2="2386.0" y2="631.1" stroke="#c08a3a"/><line x1="3270.3" y1="699.5" x2="1427.5" y2="629.9" stroke="#c08a3a"/><line x1="665.5" y1="688.3" x2="2377.8" y2="630.9" stroke="#c08a3a"/><line x1="3270.7" y1="698.1" x2="1435.0" y2="629.8" stroke="#c08a3a"/><line x1="665.0" y1="687.1" x2="2369.8" y2="630.8" stroke="#c08a3a"/><line x1="3271.2" y1="696.9" x2="1442.5" y2="629.6" stroke="#c08a3a"/><line x1="664.6" y1="686.0" x2="2361.8" y2="630.6" stroke="#c08a3a"/><line x1="3271.6" y1="695.6" x2="1449.9" y2="629.5" stroke="#c08a3a"/><line x1="664.2" y1="684.9" x2="2353.9" y2="630.5" stroke="#c08a3a"/><line x1="3272.1" y1="694.4" x2="1457.2" y2="629.4" stroke="#c08a3a"/><line x1="663.8" y1="683.9" x2="2346.1" y2="630.4" stroke="#dba35e"/><line x1="3272.5" y1="693.2" x2="1464.5" y2="629.3" stroke="#dba35e"/><line x1="663.4" y1="682.8" x2="2338.3" y2="630.2" stroke="#c08a3a"/><line x1="3272.9" y1="692.1" x2="1471.7" y2="629.2" stroke="#c08a3a"/><line x1="663.0" y1="681.8" x2="2330.6" y2="630.1" stroke="#c08a3a"/><line x1="3273.3" y1="691.0" x2="1478.9" y2="629.1" stroke="#c08a3a"/><line x1="662.7" y1="680.8" x2="2323.0" y2="629.9" stroke="#c08a3a"/><line x1="3273.7" y1="689.9" x2="1486.0" y2="628.9" stroke="#c08a3a"/><line x1="662.3" y1="679.9" x2="2315.4" y2="629.8" stroke="#c08a3a"/><line x1="3274.0" y1="688.8" x2="1493.0" y2="628.8" stroke="#c08a3a"/><line x1="661.9" y1="678.9" x2="2307.9" y2="629.7" stroke="#c08a3a"/><line x1="3274.4" y1="687.7" x2="1500.0" y2="628.7" stroke="#c08a3a"/><line x1="661.6" y1="678.0" x2="2300.5" y2="629.5" stroke="#c08a3a"/><line x1="3274.8" y1="686.7" x2="1507.0" y2="628.6" stroke="#c08a3a"/><line x1="661.2" y1="677.1" x2="2293.2" y2="629.4" stroke="#c08a3a"/><line x1="3275.1" y1="685.7" x2="1513.9" y2="628.5" stroke="#c08a3a"/><line x1="660.9" y1="676.2" x2="2285.9" y2="629.3" stroke="#dba35e"/><line x1="3275.5" y1="684.7" x2="1520.7" y2="628.4" stroke="#dba35e"/><line x1="660.6" y1="675.4" x2="2278.6" y2="629.2" stroke="#c08a3a"/><line x1="3275.8" y1="683.8" x2="1527.5" y2="628.3" stroke="#c08a3a"/><line x1="660.3" y1="674.5" x2="2271.5" y2="629.0" stroke="#c08a3a"/><line x1="3276.1" y1="682.9" x2="1534.2" y2="628.2" stroke="#c08a3a"/><line x1="660.0" y1="673.7" x2="2264.4" y2="628.9" stroke="#c08a3a"/><line x1="3276.5" y1="681.9" x2="1540.9" y2="628.1" stroke="#c08a3a"/><line x1="659.6" y1="672.9" x2="2257.3" y2="628.8" stroke="#c08a3a"/><line x1="3276.8" y1="681.1" x2="1547.6" y2="628.0" stroke="#c08a3a"/><line x1="659.3" y1="672.1" x2="2250.4" y2="628.7" stroke="#c08a3a"/><line x1="3277.1" y1="680.2" x2="1554.1" y2="627.9" stroke="#c08a3a"/><line x1="659.1" y1="671.3" x2="2243.4" y2="628.5" stroke="#c08a3a"/><line x1="3277.4" y1="679.3" x2="1560.7" y2="627.7" stroke="#c08a3a"/><line x1="658.8" y1="670.6" x2="2236.6" y2="628.4" stroke="#c08a3a"/><line x1="3277.7" y1="678.5" x2="1567.2" y2="627.6" stroke="#c08a3a"/><line x1="658.5" y1="669.8" x2="2229.8" y2="628.3" stroke="#dba35e"/><line x1="3278.0" y1="677.7" x2="1573.6" y2="627.5" stroke="#dba35e"/><line x1="658.2" y1="669.1" x2="2223.0" y2="628.2" stroke="#c08a3a"/><line x1="3278.3" y1="676.9" x2="1580.0" y2="627.4" stroke="#c08a3a"/><line x1="657.9" y1="668.4" x2="2216.3" y2="628.0" stroke="#c08a3a"/><line x1="3278.5" y1="676.1" x2="1586.4" y2="627.3" stroke="#c08a3a"/><line x1="657.7" y1="667.7" x2="2209.7" y2="627.9" stroke="#c08a3a"/><line x1="3278.8" y1="675.3" x2="1592.7" y2="627.2" stroke="#c08a3a"/><line x1="657.4" y1="667.0" x2="2203.1" y2="627.8" stroke="#c08a3a"/><line x1="3279.1" y1="674.6" x2="1598.9" y2="627.1" stroke="#c08a3a"/><line x1="657.2" y1="666.4" x2="2196.6" y2="627.7" stroke="#c08a3a"/><line x1="3279.3" y1="673.8" x2="1605.1" y2="627.0" stroke="#c08a3a"/><line x1="656.9" y1="665.7" x2="2190.1" y2="627.6" stroke="#c08a3a"/><line x1="3279.6" y1="673.1" x2="1611.3" y2="626.9" stroke="#c08a3a"/><line x1="656.7" y1="665.1" x2="2183.7" y2="627.5" stroke="#c08a3a"/><line x1="3279.9" y1="672.4" x2="1617.4" y2="626.8" stroke="#c08a3a"/><line x1="656.4" y1="664.4" x2="2177.3" y2="627.4" stroke="#dba35e"/><line x1="3280.1" y1="671.7" x2="1623.5" y2="626.7" stroke="#dba35e"/><line x1="656.2" y1="663.8" x2="2171.0" y2="627.2" stroke="#c08a3a"/><line x1="3280.3" y1="671.0" x2="1629.5" y2="626.6" stroke="#c08a3a"/><line x1="656.0" y1="663.2" x2="2164.8" y2="627.1" stroke="#c08a3a"/><line x1="3280.6" y1="670.3" x2="1635.5" y2="626.6" stroke="#c08a3a"/><line x1="655.8" y1="662.6" x2="2158.6" y2="627.0" stroke="#c08a3a"/><line x1="3280.8" y1="669.7" x2="1641.4" y2="626.5" stroke="#c08a3a"/><line x1="655.5" y1="662.0" x2="2152.4" y2="626.9" stroke="#c08a3a"/><line x1="3281.0" y1="669.0" x2="1647.3" y2="626.4" stroke="#c08a3a"/><line x1="655.3" y1="661.5" x2="2146.3" y2="626.8" stroke="#c08a3a"/><line x1="3281.3" y1="668.4" x2="1653.2" y2="626.3" stroke="#c08a3a"/><line x1="655.1" y1="660.9" x2="2140.2" y2="626.7" stroke="#c08a3a"/><line x1="3281.5" y1="667.8" x2="1659.0" y2="626.2" stroke="#c08a3a"/><line x1="654.9" y1="660.4" x2="2134.2" y2="626.6" stroke="#c08a3a"/><line x1="3281.7" y1="667.2" x2="1664.8" y2="626.1" stroke="#c08a3a"/><line x1="654.7" y1="659.8" x2="2128.2" y2="626.5" stroke="#dba35e"/><line x1="3281.9" y1="666.6" x2="1670.5" y2="626.0" stroke="#dba35e"/><line x1="654.5" y1="659.3" x2="2122.3" y2="626.4" stroke="#c08a3a"/><line x1="3282.1" y1="666.0" x2="1676.2" y2="625.9" stroke="#c08a3a"/><line x1="654.3" y1="658.8" x2="2116.5" y2="626.3" stroke="#c08a3a"/><line x1="3282.3" y1="665.4" x2="1681.9" y2="625.8" stroke="#c08a3a"/><line x1="654.1" y1="658.3" x2="2110.6" y2="626.2" stroke="#c08a3a"/><line x1="3282.5" y1="664.8" x2="1687.5" y2="625.7" stroke="#c08a3a"/><line x1="653.9" y1="657.8" x2="2104.9" y2="626.1" stroke="#c08a3a"/><line x1="3282.7" y1="664.3" x2="1693.1" y2="625.6" stroke="#c08a3a"/><line x1="653.7" y1="657.3" x2="2099.1" y2="626.0" stroke="#c08a3a"/><line x1="3282.9" y1="663.7" x2="1698.6" y2="625.5" stroke="#c08a3a"/><line x1="653.5" y1="656.8" x2="2093.4" y2="625.9" stroke="#c08a3a"/><line x1="3283.1" y1="663.2" x2="1704.1" y2="625.5" stroke="#c08a3a"/><line x1="653.4" y1="656.3" x2="2087.8" y2="625.8" stroke="#c08a3a"/><line x1="3283.3" y1="662.6" x2="1709.6" y2="625.4" stroke="#c08a3a"/><line x1="653.2" y1="655.8" x2="2082.2" y2="625.7" stroke="#dba35e"/><line x1="3283.5" y1="662.1" x2="1715.0" y2="625.3" stroke="#dba35e"/><line x1="653.0" y1="655.4" x2="2076.6" y2="625.6" stroke="#c08a3a"/><line x1="3283.7" y1="661.6" x2="1720.4" y2="625.2" stroke="#c08a3a"/><line x1="652.8" y1="654.9" x2="2071.1" y2="625.5" stroke="#c08a3a"/><line x1="3283.9" y1="661.1" x2="1725.8" y2="625.1" stroke="#c08a3a"/><line x1="652.7" y1="654.5" x2="2065.6" y2="625.4" stroke="#c08a3a"/><line x1="3284.0" y1="660.6" x2="1731.1" y2="625.0" stroke="#c08a3a"/><line x1="652.5" y1="654.0" x2="2060.2" y2="625.3" stroke="#c08a3a"/><line x1="3284.2" y1="660.1" x2="1736.4" y2="624.9" stroke="#c08a3a"/><line x1="652.3" y1="653.6" x2="2054.8" y2="625.2" stroke="#c08a3a"/><line x1="3284.4" y1="659.6" x2="1741.7" y2="624.9" stroke="#c08a3a"/><line x1="652.2" y1="653.1" x2="2049.4" y2="625.1" stroke="#c08a3a"/><line x1="3284.5" y1="659.2" x2="1746.9" y2="624.8" stroke="#c08a3a"/><line x1="652.0" y1="652.7" x2="2044.1" y2="625.0" stroke="#c08a3a"/><line x1="3284.7" y1="658.7" x2="1752.0" y2="624.7" stroke="#c08a3a"/><line x1="2976.8" y1="1528.7" x2="735.7" y2="640.9" stroke="#e0405a" stroke-width="2"/><line x1="956.0" y1="1455.7" x2="3181.0" y2="645.2" stroke="#5b9be8" stroke-width="2"/></g>
<rect x="953" y="655" width="1743" height="205" fill="url(#fog)"/>
<line x1="1824" y1="247" x2="1824" y2="1145" stroke="#a6d34a" stroke-width="1.6"/>
<polygon points="953.0,1082.0 1052.3,1061.3 1151.5,1040.6 1250.8,1019.9 1350.1,999.2 1449.4,978.6 1548.6,957.1 1647.9,934.7 1747.2,912.4 1846.5,890.0 1945.7,870.2 2045.0,853.1 2045.0,1098.5 1945.7,1121.6 1846.5,1144.8 1747.2,1176.3 1647.9,1210.4 1548.6,1246.8 1449.4,1283.2 1350.1,1317.8 1250.8,1347.8 1151.5,1377.9 1052.3,1408.0 953.0,1438.0" fill="#4f5860"/>
<polygon points="2034.0,855.0 2094.2,867.2 2154.4,879.4 2214.5,891.7 2274.7,903.9 2334.9,917.6 2395.1,932.3 2455.3,947.0 2515.5,961.8 2575.6,976.5 2635.8,991.3 2696.0,1006.0 2696.0,1316.7 2635.8,1296.6 2575.6,1276.5 2515.5,1256.5 2455.3,1236.4 2395.1,1216.4 2334.9,1196.3 2274.7,1176.2 2214.5,1156.2 2154.4,1136.1 2094.2,1116.1 2034.0,1096.0" fill="#495158"/>
<g clip-path="url(#holes)"><rect x="900" y="800" width="1900" height="600" fill="#3d3327"/><use href="#grid"/></g>
<line x1="968.0" y1="1096.4" x2="1035.4" y2="1319.7" stroke="#16191c" stroke-width="13"/><line x1="1024.0" y1="1085.3" x2="1084.1" y2="1307.1" stroke="#16191c" stroke-width="13"/><line x1="1080.0" y1="1074.1" x2="1132.8" y2="1294.6" stroke="#16191c" stroke-width="13"/><line x1="1136.0" y1="1063.0" x2="1181.5" y2="1282.0" stroke="#16191c" stroke-width="13"/><line x1="1192.0" y1="1051.9" x2="1230.2" y2="1269.4" stroke="#16191c" stroke-width="13"/><line x1="1248.0" y1="1040.7" x2="1278.9" y2="1256.9" stroke="#16191c" stroke-width="13"/><line x1="1304.0" y1="1029.6" x2="1327.6" y2="1244.3" stroke="#16191c" stroke-width="13"/><line x1="948.3" y1="1128.1" x2="1334.3" y2="1049.0" stroke="#16191c" stroke-width="11"/><line x1="960.1" y1="1165.5" x2="1337.7" y2="1084.6" stroke="#16191c" stroke-width="11"/><line x1="972.0" y1="1202.8" x2="1341.0" y2="1120.3" stroke="#16191c" stroke-width="11"/><line x1="983.8" y1="1240.1" x2="1344.3" y2="1156.0" stroke="#16191c" stroke-width="11"/><line x1="995.6" y1="1277.5" x2="1347.7" y2="1191.6" stroke="#16191c" stroke-width="11"/><line x1="1007.5" y1="1314.8" x2="1351.0" y2="1227.3" stroke="#16191c" stroke-width="11"/>
<line x1="1426.9" y1="1002.9" x2="1451.8" y2="1183.8" stroke="#16191c" stroke-width="11"/><line x1="1470.8" y1="996.8" x2="1493.2" y2="1173.2" stroke="#16191c" stroke-width="11"/><line x1="1514.6" y1="990.6" x2="1534.8" y2="1162.8" stroke="#16191c" stroke-width="11"/><line x1="1558.4" y1="984.4" x2="1576.2" y2="1152.2" stroke="#16191c" stroke-width="11"/><line x1="1602.2" y1="978.2" x2="1617.8" y2="1141.8" stroke="#16191c" stroke-width="11"/><line x1="1646.1" y1="972.1" x2="1659.2" y2="1131.2" stroke="#16191c" stroke-width="11"/><line x1="1408.0" y1="1027.3" x2="1669.4" y2="987.3" stroke="#16191c" stroke-width="10"/><line x1="1412.4" y1="1057.8" x2="1671.4" y2="1013.5" stroke="#16191c" stroke-width="10"/><line x1="1416.7" y1="1088.3" x2="1673.4" y2="1039.7" stroke="#16191c" stroke-width="10"/><line x1="1421.0" y1="1118.8" x2="1675.4" y2="1065.8" stroke="#16191c" stroke-width="10"/><line x1="1425.4" y1="1149.3" x2="1677.4" y2="1092.0" stroke="#16191c" stroke-width="10"/><line x1="1429.7" y1="1179.8" x2="1679.4" y2="1118.2" stroke="#16191c" stroke-width="10"/>
<line x1="1741.0" y1="933.0" x2="1741.0" y2="1109.1" stroke="#16191c" stroke-width="10"/><line x1="1773.0" y1="927.0" x2="1773.0" y2="1099.2" stroke="#16191c" stroke-width="10"/><line x1="1805.0" y1="921.0" x2="1805.0" y2="1089.4" stroke="#16191c" stroke-width="10"/><line x1="1837.0" y1="915.0" x2="1837.0" y2="1079.6" stroke="#16191c" stroke-width="10"/><line x1="1869.0" y1="909.0" x2="1869.0" y2="1069.8" stroke="#16191c" stroke-width="10"/><line x1="1901.0" y1="903.0" x2="1901.0" y2="1059.9" stroke="#16191c" stroke-width="10"/><line x1="1725.0" y1="956.8" x2="1917.0" y2="918.1" stroke="#16191c" stroke-width="9"/><line x1="1725.0" y1="986.4" x2="1917.0" y2="943.9" stroke="#16191c" stroke-width="9"/><line x1="1725.0" y1="1016.1" x2="1917.0" y2="969.8" stroke="#16191c" stroke-width="9"/><line x1="1725.0" y1="1045.8" x2="1917.0" y2="995.6" stroke="#16191c" stroke-width="9"/><line x1="1725.0" y1="1075.4" x2="1917.0" y2="1021.4" stroke="#16191c" stroke-width="9"/><line x1="1725.0" y1="1105.1" x2="1917.0" y2="1047.2" stroke="#16191c" stroke-width="9"/>
<line x1="1972.7" y1="883.0" x2="1972.7" y2="1043.0" stroke="#16191c" stroke-width="9"/><line x1="2002.1" y1="883.0" x2="2002.1" y2="1043.0" stroke="#16191c" stroke-width="9"/><line x1="2031.5" y1="883.0" x2="2031.5" y2="1043.0" stroke="#16191c" stroke-width="9"/><line x1="2060.9" y1="883.0" x2="2060.9" y2="1043.0" stroke="#16191c" stroke-width="9"/><line x1="2090.3" y1="883.0" x2="2090.3" y2="1043.0" stroke="#16191c" stroke-width="9"/><line x1="1958.0" y1="905.4" x2="2105.0" y2="905.4" stroke="#16191c" stroke-width="8"/><line x1="1958.0" y1="937.4" x2="2105.0" y2="937.4" stroke="#16191c" stroke-width="8"/><line x1="1958.0" y1="969.4" x2="2105.0" y2="969.4" stroke="#16191c" stroke-width="8"/><line x1="1958.0" y1="1001.4" x2="2105.0" y2="1001.4" stroke="#16191c" stroke-width="8"/><line x1="1958.0" y1="1033.4" x2="2105.0" y2="1033.4" stroke="#16191c" stroke-width="8"/>
<line x1="2167.7" y1="897.6" x2="2165.2" y2="1057.4" stroke="#16191c" stroke-width="10"/><line x1="2201.1" y1="904.7" x2="2195.6" y2="1064.1" stroke="#16191c" stroke-width="10"/><line x1="2234.6" y1="911.9" x2="2226.1" y2="1070.8" stroke="#16191c" stroke-width="10"/><line x1="2268.0" y1="919.0" x2="2256.5" y2="1077.5" stroke="#16191c" stroke-width="10"/><line x1="2301.4" y1="926.1" x2="2286.9" y2="1084.2" stroke="#16191c" stroke-width="10"/><line x1="2334.9" y1="933.3" x2="2317.4" y2="1090.9" stroke="#16191c" stroke-width="10"/><line x1="2368.3" y1="940.4" x2="2347.8" y2="1097.6" stroke="#16191c" stroke-width="10"/><line x1="2150.9" y1="912.7" x2="2382.4" y2="962.3" stroke="#16191c" stroke-width="9"/><line x1="2150.7" y1="939.3" x2="2378.8" y2="988.5" stroke="#16191c" stroke-width="9"/><line x1="2150.6" y1="966.0" x2="2375.1" y2="1014.6" stroke="#16191c" stroke-width="9"/><line x1="2150.4" y1="992.7" x2="2371.4" y2="1040.8" stroke="#16191c" stroke-width="9"/><line x1="2150.2" y1="1019.3" x2="2367.8" y2="1067.0" stroke="#16191c" stroke-width="9"/><line x1="2150.1" y1="1046.0" x2="2364.1" y2="1093.2" stroke="#16191c" stroke-width="9"/>
<line x1="2436.8" y1="961.4" x2="2433.1" y2="1148.3" stroke="#16191c" stroke-width="11"/><line x1="2480.4" y1="970.1" x2="2477.2" y2="1162.9" stroke="#16191c" stroke-width="11"/><line x1="2523.9" y1="978.8" x2="2521.4" y2="1177.4" stroke="#16191c" stroke-width="11"/><line x1="2567.5" y1="987.5" x2="2565.5" y2="1192.0" stroke="#16191c" stroke-width="11"/><line x1="2611.1" y1="996.2" x2="2609.6" y2="1206.6" stroke="#16191c" stroke-width="11"/><line x1="2654.6" y1="1004.9" x2="2653.8" y2="1221.1" stroke="#16191c" stroke-width="11"/><line x1="2698.2" y1="1013.6" x2="2697.9" y2="1235.7" stroke="#16191c" stroke-width="11"/><line x1="2414.6" y1="975.4" x2="2720.0" y2="1040.5" stroke="#16191c" stroke-width="10"/><line x1="2414.0" y1="1001.7" x2="2720.0" y2="1072.6" stroke="#16191c" stroke-width="10"/><line x1="2413.5" y1="1028.0" x2="2720.0" y2="1104.8" stroke="#16191c" stroke-width="10"/><line x1="2412.9" y1="1054.3" x2="2720.0" y2="1136.9" stroke="#16191c" stroke-width="10"/><line x1="2412.3" y1="1080.5" x2="2720.0" y2="1169.1" stroke="#16191c" stroke-width="10"/><line x1="2411.7" y1="1106.8" x2="2720.0" y2="1201.2" stroke="#16191c" stroke-width="10"/><line x1="2411.2" y1="1133.1" x2="2720.0" y2="1233.4" stroke="#16191c" stroke-width="10"/>
<linearGradient id="pg" x1="0" y1="900" x2="0" y2="1400" gradientUnits="userSpaceOnUse"><stop offset="0" stop-color="#59626a"/><stop offset="1" stop-color="#9aa2a9"/></linearGradient>
<linearGradient id="pgr" x1="0" y1="880" x2="0" y2="1250" gradientUnits="userSpaceOnUse"><stop offset="0" stop-color="#535c64"/><stop offset="1" stop-color="#7d868d"/></linearGradient>
<polygon points="900.0,1093.0 1009.0,1082.0 1109.1,1421.1 1021.3,1454.0" fill="url(#pg)"/>
<polygon points="1345.0,1012.0 1430.0,1000.0 1470.3,1290.3 1397.0,1319.3" fill="url(#pg)"/>
<polygon points="1664.0,962.0 1728.0,952.0 1735.7,1182.9 1677.5,1204.9" fill="url(#pg)"/>
<polygon points="1915.0,900.0 1960.0,892.0 1949.6,1118.3 1908.0,1128.8" fill="url(#pg)"/>
<polygon points="2105.0,870.0 2166.0,882.0 2136.3,1140.0 2081.5,1119.7" fill="url(#pgr)"/>
<polygon points="2361.0,930.0 2415.0,941.0 2357.7,1223.0 2310.4,1205.0" fill="url(#pgr)"/>
<polygon points="953.0,1333.3 981.0,1329.8 1009.0,1326.3 1037.0,1319.3 1065.0,1312.1 1093.0,1304.8 1121.0,1297.6 1149.0,1290.4 1177.0,1283.2 1205.0,1275.9 1233.0,1268.7 1261.0,1261.5 1289.0,1254.3 1317.0,1247.0 1345.0,1239.8 1373.0,1225.0 1401.0,1207.6 1429.0,1190.2 1457.0,1182.4 1485.0,1175.3 1513.0,1168.3 1541.0,1161.2 1569.0,1154.1 1597.0,1147.0 1625.0,1139.9 1653.0,1132.8 1681.0,1125.7 1709.0,1118.3 1737.0,1110.3 1765.0,1101.7 1793.0,1093.1 1821.0,1084.5 1849.0,1075.9 1877.0,1067.3 1905.0,1058.7 1933.0,1053.7 1961.0,1051.3 1989.0,1049.0 2017.0,1046.6 2045.0,1044.3 2045.0,1067.3 2017.0,1069.6 1989.0,1072.0 1961.0,1074.3 1933.0,1076.7 1905.0,1081.7 1877.0,1090.3 1849.0,1098.9 1821.0,1107.5 1793.0,1116.1 1765.0,1124.7 1737.0,1133.3 1709.0,1141.6 1681.0,1149.7 1653.0,1156.9 1625.0,1164.1 1597.0,1171.3 1569.0,1178.5 1541.0,1185.7 1513.0,1192.9 1485.0,1200.1 1457.0,1207.3 1429.0,1215.2 1401.0,1232.2 1373.0,1249.2 1345.0,1263.8 1317.0,1271.2 1289.0,1278.6 1261.0,1286.0 1233.0,1293.4 1205.0,1300.8 1177.0,1308.2 1149.0,1315.6 1121.0,1323.0 1093.0,1330.4 1065.0,1337.7 1037.0,1345.1 1009.0,1352.4 981.0,1357.4 953.0,1362.5" fill="#c3c9ce"/>
<polygon points="953.0,1362.5 981.0,1357.4 1009.0,1352.4 1037.0,1345.1 1065.0,1337.7 1093.0,1330.4 1121.0,1323.0 1149.0,1315.6 1177.0,1308.2 1205.0,1300.8 1233.0,1293.4 1261.0,1286.0 1289.0,1278.6 1317.0,1271.2 1345.0,1263.8 1373.0,1249.2 1401.0,1232.2 1429.0,1215.2 1457.0,1207.3 1485.0,1200.1 1513.0,1192.9 1541.0,1185.7 1569.0,1178.5 1597.0,1171.3 1625.0,1164.1 1653.0,1156.9 1681.0,1149.7 1709.0,1141.6 1737.0,1133.3 1765.0,1124.7 1793.0,1116.1 1821.0,1107.5 1849.0,1098.9 1877.0,1090.3 1905.0,1081.7 1933.0,1076.7 1961.0,1074.3 1989.0,1072.0 2017.0,1069.6 2045.0,1067.3 2045.0,1088.4 2017.0,1094.8 1989.0,1101.2 1961.0,1107.7 1933.0,1114.1 1905.0,1120.5 1877.0,1126.9 1849.0,1133.3 1821.0,1140.0 1793.0,1149.5 1765.0,1158.9 1737.0,1168.3 1709.0,1177.8 1681.0,1187.2 1653.0,1196.7 1625.0,1206.7 1597.0,1216.9 1569.0,1227.0 1541.0,1237.2 1513.0,1247.4 1485.0,1257.5 1457.0,1267.7 1429.0,1277.9 1401.0,1288.0 1373.0,1297.8 1345.0,1306.2 1317.0,1314.6 1289.0,1322.9 1261.0,1331.3 1233.0,1339.7 1205.0,1348.1 1177.0,1356.5 1149.0,1364.8 1121.0,1373.2 1093.0,1381.6 1065.0,1390.1 1037.0,1398.6 1009.0,1407.1 981.0,1415.5 953.0,1424.0" fill="#adb5bb"/>
<polygon points="953.0,1424.0 981.0,1415.5 1009.0,1407.1 1037.0,1398.6 1065.0,1390.1 1093.0,1381.6 1121.0,1373.2 1149.0,1364.8 1177.0,1356.5 1205.0,1348.1 1233.0,1339.7 1261.0,1331.3 1289.0,1322.9 1317.0,1314.6 1345.0,1306.2 1373.0,1297.8 1401.0,1288.0 1429.0,1277.9 1457.0,1267.7 1485.0,1257.5 1513.0,1247.4 1541.0,1237.2 1569.0,1227.0 1597.0,1216.9 1625.0,1206.7 1653.0,1196.7 1681.0,1187.2 1709.0,1177.8 1737.0,1168.3 1765.0,1158.9 1793.0,1149.5 1821.0,1140.0 1849.0,1133.3 1877.0,1126.9 1905.0,1120.5 1933.0,1114.1 1961.0,1107.7 1989.0,1101.2 2017.0,1094.8 2045.0,1088.4 2045.0,1098.5 2017.0,1105.0 1989.0,1111.5 1961.0,1118.1 1933.0,1124.6 1905.0,1131.1 1877.0,1137.6 1849.0,1144.2 1821.0,1151.0 1793.0,1160.6 1765.0,1170.2 1737.0,1179.8 1709.0,1189.4 1681.0,1199.0 1653.0,1208.6 1625.0,1218.8 1597.0,1229.1 1569.0,1239.3 1541.0,1249.6 1513.0,1259.9 1485.0,1270.1 1457.0,1280.4 1429.0,1290.7 1401.0,1300.9 1373.0,1310.8 1345.0,1319.3 1317.0,1327.8 1289.0,1336.3 1261.0,1344.7 1233.0,1353.2 1205.0,1361.7 1177.0,1370.2 1149.0,1378.7 1121.0,1387.2 1093.0,1395.6 1065.0,1404.1 1037.0,1412.6 1009.0,1421.1 981.0,1429.5 953.0,1438.0" fill="#58616a"/>
<polygon points="2040.0,1043.0 2062.6,1045.3 2085.2,1047.5 2107.9,1049.8 2130.5,1052.0 2153.1,1054.7 2175.7,1059.7 2198.3,1064.7 2221.0,1069.7 2243.6,1074.7 2266.2,1079.6 2288.8,1084.6 2311.4,1089.6 2334.1,1094.6 2356.7,1099.6 2379.3,1114.6 2401.9,1133.4 2424.6,1145.5 2447.2,1152.9 2469.8,1160.4 2492.4,1167.9 2515.0,1175.3 2537.7,1182.8 2560.3,1190.3 2582.9,1197.7 2605.5,1205.2 2628.1,1212.7 2650.8,1220.1 2673.4,1227.6 2696.0,1235.1 2696.0,1253.9 2673.4,1246.3 2650.8,1238.7 2628.1,1231.1 2605.5,1223.5 2582.9,1215.9 2560.3,1208.2 2537.7,1200.6 2515.0,1193.0 2492.4,1185.4 2469.8,1177.8 2447.2,1170.2 2424.6,1162.6 2401.9,1150.4 2379.3,1131.6 2356.7,1116.6 2334.1,1111.5 2311.4,1106.4 2288.8,1101.3 2266.2,1096.2 2243.6,1091.1 2221.0,1086.0 2198.3,1080.9 2175.7,1075.8 2153.1,1070.7 2130.5,1068.2 2107.9,1066.2 2085.2,1064.1 2062.6,1062.1 2040.0,1060.0" fill="#b3bac0"/>
<polygon points="2040.0,1060.0 2062.6,1062.1 2085.2,1064.1 2107.9,1066.2 2130.5,1068.2 2153.1,1070.7 2175.7,1075.8 2198.3,1080.9 2221.0,1086.0 2243.6,1091.1 2266.2,1096.2 2288.8,1101.3 2311.4,1106.4 2334.1,1111.5 2356.7,1116.6 2379.3,1131.6 2401.9,1150.4 2424.6,1162.6 2447.2,1170.2 2469.8,1177.8 2492.4,1185.4 2515.0,1193.0 2537.7,1200.6 2560.3,1208.2 2582.9,1215.9 2605.5,1223.5 2628.1,1231.1 2650.8,1238.7 2673.4,1246.3 2696.0,1253.9 2696.0,1290.7 2673.4,1283.2 2650.8,1275.7 2628.1,1268.3 2605.5,1260.8 2582.9,1253.3 2560.3,1245.8 2537.7,1238.4 2515.0,1230.9 2492.4,1223.4 2469.8,1215.9 2447.2,1208.5 2424.6,1201.0 2401.9,1193.5 2379.3,1186.0 2356.7,1178.8 2334.1,1172.3 2311.4,1165.8 2288.8,1159.3 2266.2,1152.8 2243.6,1146.3 2221.0,1139.9 2198.3,1133.4 2175.7,1126.9 2153.1,1120.4 2130.5,1113.9 2107.9,1107.4 2085.2,1101.0 2062.6,1094.5 2040.0,1088.0" fill="#6f777e"/>
<polygon points="2040.0,1088.0 2062.6,1094.5 2085.2,1101.0 2107.9,1107.4 2130.5,1113.9 2153.1,1120.4 2175.7,1126.9 2198.3,1133.4 2221.0,1139.9 2243.6,1146.3 2266.2,1152.8 2288.8,1159.3 2311.4,1165.8 2334.1,1172.3 2356.7,1178.8 2379.3,1186.0 2401.9,1193.5 2424.6,1201.0 2447.2,1208.5 2469.8,1215.9 2492.4,1223.4 2515.0,1230.9 2537.7,1238.4 2560.3,1245.8 2582.9,1253.3 2605.5,1260.8 2628.1,1268.3 2650.8,1275.7 2673.4,1283.2 2696.0,1290.7 2696.0,1316.7 2673.4,1309.1 2650.8,1301.6 2628.1,1294.0 2605.5,1286.5 2582.9,1279.0 2560.3,1271.4 2537.7,1263.9 2515.0,1256.3 2492.4,1248.8 2469.8,1241.3 2447.2,1233.7 2424.6,1226.2 2401.9,1218.6 2379.3,1211.1 2356.7,1203.6 2334.1,1196.0 2311.4,1188.5 2288.8,1180.9 2266.2,1173.4 2243.6,1165.9 2221.0,1158.3 2198.3,1150.8 2175.7,1143.2 2153.1,1135.7 2130.5,1128.2 2107.9,1120.6 2085.2,1113.1 2062.6,1105.5 2040.0,1098.0" fill="#3f464c"/>
<polygon points="953.0,1062.0 1051.3,1042.4 1149.5,1022.8 1247.8,1003.3 1346.1,983.7 1444.4,964.1 1542.6,943.5 1640.9,921.6 1739.2,899.8 1837.5,877.9 1935.7,857.6 2034.0,840.0 2034.0,855.0 1935.7,871.9 1837.5,892.1 1739.2,914.2 1640.9,936.3 1542.6,958.4 1444.4,979.6 1346.1,1000.1 1247.8,1020.6 1149.5,1041.0 1051.3,1061.5 953.0,1082.0" fill="#1d2023"/>
<polygon points="2034.0,840.0 2094.2,852.4 2154.4,864.9 2214.5,877.3 2274.7,889.8 2334.9,902.8 2395.1,916.4 2455.3,929.9 2515.5,943.4 2575.6,956.9 2635.8,970.5 2696.0,984.0 2696.0,1006.0 2635.8,991.3 2575.6,976.5 2515.5,961.8 2455.3,947.0 2395.1,932.3 2334.9,917.6 2274.7,903.9 2214.5,891.7 2154.4,879.4 2094.2,867.2 2034.0,855.0" fill="#1b1e21"/>
<polygon points="953.0,993.0 1051.3,975.4 1149.5,957.8 1247.8,940.2 1346.1,922.6 1444.4,905.0 1542.6,887.3 1640.9,869.5 1739.2,851.6 1837.5,833.8 1935.7,816.2 2034.0,799.0 2034.0,840.0 1935.7,857.6 1837.5,877.9 1739.2,899.8 1640.9,921.6 1542.6,943.5 1444.4,964.1 1346.1,983.7 1247.8,1003.3 1149.5,1022.8 1051.3,1042.4 953.0,1062.0" fill="#465058"/>
<polygon points="2034.0,799.0 2094.2,809.8 2154.4,820.5 2214.5,831.3 2274.7,842.1 2334.9,852.5 2395.1,862.8 2455.3,873.0 2515.5,883.3 2575.6,893.5 2635.8,903.8 2696.0,914.0 2696.0,984.0 2635.8,970.5 2575.6,956.9 2515.5,943.4 2455.3,929.9 2395.1,916.4 2334.9,902.8 2274.7,889.8 2214.5,877.3 2154.4,864.9 2094.2,852.4 2034.0,840.0" fill="#262b30"/>
<polygon points="953.0,959.0 1051.3,942.1 1149.5,925.2 1247.8,908.3 1346.1,891.4 1444.4,874.6 1542.6,858.3 1640.9,842.8 1739.2,827.3 1837.5,811.9 1935.7,796.5 2034.0,786.0 2034.0,799.0 1935.7,816.2 1837.5,833.8 1739.2,851.6 1640.9,869.5 1542.6,887.3 1444.4,905.0 1346.1,922.6 1247.8,940.2 1149.5,957.8 1051.3,975.4 953.0,993.0" fill="#86909a"/>
<polygon points="2034.0,782.9 2094.2,792.7 2154.4,802.4 2214.5,812.2 2274.7,821.9 2334.9,830.1 2395.1,837.0 2455.3,844.0 2515.5,851.0 2575.6,858.0 2635.8,865.0 2696.0,872.0 2696.0,914.0 2635.8,903.8 2575.6,893.5 2515.5,883.3 2455.3,873.0 2395.1,862.8 2334.9,852.5 2274.7,842.1 2214.5,831.3 2154.4,820.5 2094.2,809.8 2034.0,799.0" fill="#7f8993"/>
<polygon points="2003,786 2053,786 2034,799 1990,806" fill="#86909a"/>
<line x1="988.0" y1="986.7" x2="1014.0" y2="1055.0" stroke="#25292d" stroke-width="8"/>
<line x1="978.0" y1="957.0" x2="1002.0" y2="986.7" stroke="#5a646d" stroke-width="7"/>
<line x1="1261.0" y1="937.8" x2="1279.2" y2="1000.6" stroke="#25292d" stroke-width="8"/>
<line x1="1251.0" y1="910.1" x2="1275.0" y2="937.8" stroke="#5a646d" stroke-width="7"/>
<line x1="1460.0" y1="902.2" x2="1473.3" y2="961.0" stroke="#25292d" stroke-width="8"/>
<line x1="1450.0" y1="875.9" x2="1474.0" y2="902.2" stroke="#5a646d" stroke-width="7"/>
<line x1="1636.0" y1="870.4" x2="1645.3" y2="922.7" stroke="#25292d" stroke-width="8"/>
<line x1="1626.0" y1="847.6" x2="1650.0" y2="870.4" stroke="#5a646d" stroke-width="7"/>
<line x1="1775.0" y1="845.2" x2="1781.8" y2="891.8" stroke="#25292d" stroke-width="8"/>
<line x1="1765.0" y1="825.7" x2="1789.0" y2="845.2" stroke="#5a646d" stroke-width="7"/>
<line x1="1896.0" y1="823.2" x2="1901.0" y2="864.9" stroke="#25292d" stroke-width="8"/>
<line x1="1886.0" y1="806.6" x2="1910.0" y2="823.2" stroke="#5a646d" stroke-width="7"/>
<line x1="2150.0" y1="819.8" x2="2145.2" y2="864.0" stroke="#3a4147" stroke-width="4"/>
<line x1="2480.0" y1="877.2" x2="2467.1" y2="935.5" stroke="#3a4147" stroke-width="4"/>
<clipPath id="floorclip"><polygon points="953.0,1438.0 1010.5,1420.6 1067.9,1403.2 1125.4,1385.8 1182.9,1368.4 1240.4,1351.0 1297.8,1333.6 1355.3,1316.2 1412.8,1296.6 1470.3,1275.5 1527.7,1254.5 1585.2,1233.4 1642.7,1212.3 1700.2,1192.5 1757.6,1172.8 1815.1,1153.0 1872.6,1138.7 1930.1,1125.3 1987.5,1111.9 2045.0,1098.5 2045.0,1099.7 2104.2,1119.4 2163.4,1139.1 2222.5,1158.8 2281.7,1178.6 2340.9,1198.3 2400.1,1218.0 2459.3,1237.8 2518.5,1257.5 2577.6,1277.2 2636.8,1296.9 2696.0,1316.7 2696.0,1475.0 2215.0,2043.0 953.0,2043.0"/></clipPath>
<polygon points="953.0,1438.0 1010.5,1420.6 1067.9,1403.2 1125.4,1385.8 1182.9,1368.4 1240.4,1351.0 1297.8,1333.6 1355.3,1316.2 1412.8,1296.6 1470.3,1275.5 1527.7,1254.5 1585.2,1233.4 1642.7,1212.3 1700.2,1192.5 1757.6,1172.8 1815.1,1153.0 1872.6,1138.7 1930.1,1125.3 1987.5,1111.9 2045.0,1098.5 2045.0,1099.7 2104.2,1119.4 2163.4,1139.1 2222.5,1158.8 2281.7,1178.6 2340.9,1198.3 2400.1,1218.0 2459.3,1237.8 2518.5,1257.5 2577.6,1277.2 2636.8,1296.9 2696.0,1316.7 2696.0,1475.0 2215.0,2043.0 953.0,2043.0" fill="#c2bbb5"/>
<g clip-path="url(#floorclip)">
<path d="M2710.7 1015.7 L2724.1 1006.4 L2770.6 1007.1 L2825.8 1017.6 L2859.1 1032.6 L2848.1 1043.2 L2797.4 1042.4 L2739.8 1030.6ZM2742.1 993.8 L2754.1 985.4 L2798.2 986.1 L2851.2 995.5 L2883.5 1008.9 L2873.7 1018.4 L2825.8 1017.6 L2770.6 1007.1ZM2505.5 1037.3 L2524.5 1026.9 L2572.9 1027.8 L2625.6 1039.4 L2653.2 1056.0 L2636.2 1067.8 L2583.1 1066.8 L2528.4 1053.7ZM2549.8 1013.1 L2566.7 1003.9 L2612.6 1004.6 L2663.4 1015.0 L2690.7 1029.8 L2675.7 1040.2 L2625.6 1039.4 L2572.9 1027.8ZM2589.4 991.5 L2604.6 983.1 L2648.2 983.8 L2697.1 993.1 L2724.1 1006.4 L2710.7 1015.7 L2663.4 1015.0 L2612.6 1004.6ZM2277.9 1061.2 L2303.5 1049.7 L2354.1 1050.6 L2403.4 1063.5 L2423.7 1082.0 L2399.5 1095.3 L2343.8 1094.2 L2293.1 1079.5ZM2337.7 1034.4 L2360.4 1024.2 L2408.2 1025.0 L2456.1 1036.4 L2477.1 1052.8 L2455.8 1064.5 L2403.4 1063.5 L2354.1 1050.6ZM2390.8 1010.5 L2411.2 1001.4 L2456.5 1002.1 L2503.0 1012.3 L2524.5 1026.9 L2505.5 1037.3 L2456.1 1036.4 L2408.2 1025.0ZM2438.5 989.1 L2456.8 980.9 L2499.9 981.6 L2545.0 990.8 L2566.7 1003.9 L2549.8 1013.1 L2503.0 1012.3 L2456.5 1002.1ZM2024.0 1087.9 L2057.7 1075.0 L2110.7 1076.0 L2155.5 1090.5 L2166.4 1111.3 L2133.2 1126.2 L2074.7 1124.9 L2029.4 1108.4ZM2102.5 1058.0 L2132.3 1046.6 L2182.2 1047.5 L2226.3 1060.3 L2239.4 1078.5 L2210.3 1091.6 L2155.5 1090.5 L2110.7 1076.0ZM2172.0 1031.5 L2198.5 1021.4 L2245.7 1022.2 L2288.9 1033.5 L2303.5 1049.7 L2277.9 1061.2 L2226.3 1060.3 L2182.2 1047.5ZM2233.9 1007.9 L2257.6 998.9 L2302.4 999.6 L2344.7 1009.8 L2360.4 1024.2 L2337.7 1034.4 L2288.9 1033.5 L2245.7 1022.2ZM2289.4 986.8 L2310.7 978.7 L2353.3 979.3 L2394.6 988.4 L2411.2 1001.4 L2390.8 1010.5 L2344.7 1009.8 L2302.4 999.6ZM1738.9 1117.8 L1782.6 1103.4 L1838.1 1104.5 L1876.9 1120.7 L1876.0 1144.2 L1831.6 1161.2 L1769.9 1159.8 L1731.9 1141.0ZM1840.4 1084.3 L1878.7 1071.6 L1930.9 1072.6 L1970.0 1086.8 L1973.0 1107.3 L1934.5 1122.0 L1876.9 1120.7 L1838.1 1104.5ZM1929.6 1054.8 L1963.4 1043.6 L2012.7 1044.5 L2051.6 1057.0 L2057.7 1075.0 L2024.0 1087.9 L1970.0 1086.8 L1930.9 1072.6ZM2008.5 1028.7 L2038.6 1018.7 L2085.2 1019.5 L2123.9 1030.7 L2132.3 1046.6 L2102.5 1058.0 L2051.6 1057.0 L2012.7 1044.5ZM2078.9 1005.4 L2105.9 996.5 L2150.1 997.2 L2188.3 1007.2 L2198.5 1021.4 L2172.0 1031.5 L2123.9 1030.7 L2085.2 1019.5ZM2142.0 984.5 L2166.3 976.5 L2208.4 977.2 L2246.0 986.2 L2257.6 998.9 L2233.9 1007.9 L2188.3 1007.2 L2150.1 997.2ZM1659.6 1080.7 L1702.3 1068.2 L1753.7 1069.2 L1787.2 1083.2 L1782.6 1103.4 L1738.9 1117.8 L1682.2 1116.6 L1649.7 1100.6ZM1759.0 1051.6 L1796.8 1040.6 L1845.4 1041.5 L1879.4 1053.9 L1878.7 1071.6 L1840.4 1084.3 L1787.2 1083.2 L1753.7 1069.2ZM1847.2 1025.9 L1880.8 1016.1 L1926.8 1016.8 L1961.1 1027.9 L1963.4 1043.6 L1929.6 1054.8 L1879.4 1053.9 L1845.4 1041.5ZM1925.8 1002.9 L1956.0 994.1 L1999.7 994.8 L2033.9 1004.7 L2038.6 1018.7 L2008.5 1028.7 L1961.1 1027.9 L1926.8 1016.8ZM1996.4 982.3 L2023.6 974.4 L2065.2 975.0 L2099.2 983.9 L2105.9 996.5 L2078.9 1005.4 L2033.9 1004.7 L1999.7 994.8ZM1481.4 1077.2 L1528.4 1064.9 L1579.0 1065.9 L1607.1 1079.7 L1595.1 1099.5 L1546.4 1113.7 L1490.6 1112.6 L1464.3 1096.8ZM1590.8 1048.5 L1632.4 1037.6 L1680.4 1038.5 L1709.5 1050.7 L1702.3 1068.2 L1659.6 1080.7 L1607.1 1079.7 L1579.0 1065.9ZM1687.9 1023.1 L1725.0 1013.4 L1770.4 1014.2 L1800.3 1025.1 L1796.8 1040.6 L1759.0 1051.6 L1709.5 1050.7 L1680.4 1038.5ZM1774.6 1000.4 L1807.9 991.7 L1851.1 992.4 L1881.3 1002.2 L1880.8 1016.1 L1847.2 1025.9 L1800.3 1025.1 L1770.4 1014.2ZM1852.5 980.1 L1882.5 972.2 L1923.6 972.8 L1954.1 981.6 L1956.0 994.1 L1925.8 1002.9 L1881.3 1002.2 L1851.1 992.4ZM1305.7 1073.7 L1356.9 1061.6 L1406.9 1062.6 L1429.6 1076.2 L1410.5 1095.7 L1356.9 1109.7 L1302.0 1108.6 L1281.6 1093.1ZM1424.9 1045.5 L1470.2 1034.7 L1517.5 1035.6 L1542.0 1047.6 L1528.4 1064.9 L1481.4 1077.2 L1429.6 1076.2 L1406.9 1062.6ZM1530.7 1020.4 L1571.1 1010.8 L1616.0 1011.6 L1641.7 1022.3 L1632.4 1037.6 L1590.8 1048.5 L1542.0 1047.6 L1517.5 1035.6ZM1625.3 998.0 L1661.5 989.4 L1704.2 990.1 L1730.7 999.7 L1725.0 1013.4 L1687.9 1023.1 L1641.7 1022.3 L1616.0 1011.6ZM1710.2 977.9 L1743.0 970.1 L1783.6 970.7 L1810.6 979.4 L1807.9 991.7 L1774.6 1000.4 L1730.7 999.7 L1704.2 990.1ZM1261.3 1042.4 L1310.2 1031.9 L1356.9 1032.7 L1376.8 1044.6 L1356.9 1061.6 L1305.7 1073.7 L1254.8 1072.7 L1237.1 1059.3ZM1375.5 1017.7 L1419.2 1008.3 L1463.5 1009.0 L1485.1 1019.6 L1470.2 1034.7 L1424.9 1045.5 L1376.8 1044.6 L1356.9 1032.7ZM1477.7 995.6 L1516.9 987.1 L1559.1 987.8 L1581.9 997.3 L1571.1 1010.8 L1530.7 1020.4 L1485.1 1019.6 L1463.5 1009.0ZM1099.8 1039.5 L1152.2 1029.0 L1198.3 1029.8 L1213.7 1041.6 L1187.8 1058.4 L1132.6 1070.3 L1082.4 1069.3 L1069.7 1056.1ZM1222.3 1015.1 L1269.2 1005.7 L1312.9 1006.5 L1330.4 1016.9 L1310.2 1031.9 L1261.3 1042.4 L1213.7 1041.6 L1198.3 1029.8ZM1331.9 993.2 L1374.0 984.8 L1415.7 985.5 L1434.8 994.9 L1419.2 1008.3 L1375.5 1017.7 L1330.4 1016.9 L1312.9 1006.5ZM940.5 1036.5 L996.4 1026.2 L1041.8 1027.0 L1052.9 1038.6 L1021.1 1055.2 L962.0 1066.9 L912.5 1066.0 L904.6 1052.9ZM1071.0 1012.4 L1121.0 1003.2 L1164.2 1003.9 L1177.8 1014.3 L1152.2 1029.0 L1099.8 1039.5 L1052.9 1038.6 L1041.8 1027.0ZM1187.9 990.9 L1232.8 982.6 L1274.0 983.2 L1289.6 992.5 L1269.2 1005.7 L1222.3 1015.1 L1177.8 1014.3 L1164.2 1003.9ZM921.6 1009.8 L974.6 1000.7 L1017.3 1001.5 L1027.1 1011.7 L996.4 1026.2 L940.5 1036.5 L894.2 1035.7 L887.4 1024.3ZM1045.6 988.5 L1093.2 980.3 L1133.9 981.0 L1146.0 990.2 L1121.0 1003.2 L1071.0 1012.4 L1027.1 1011.7 L1017.3 1001.5ZM905.0 986.2 L955.3 978.1 L995.5 978.8 L1004.2 987.8 L974.6 1000.7 L921.6 1009.8 L878.2 1009.1 L872.2 999.0Z" fill="none" stroke="#aca8a5" stroke-width="3" stroke-linejoin="round"/>
<path d="M2710.7 1015.7 L2724.1 1006.4 L2770.6 1007.1 L2825.8 1017.6 L2859.1 1032.6 L2848.1 1043.2 L2797.4 1042.4 L2739.8 1030.6ZM2742.1 993.8 L2754.1 985.4 L2798.2 986.1 L2851.2 995.5 L2883.5 1008.9 L2873.7 1018.4 L2825.8 1017.6 L2770.6 1007.1ZM2505.5 1037.3 L2524.5 1026.9 L2572.9 1027.8 L2625.6 1039.4 L2653.2 1056.0 L2636.2 1067.8 L2583.1 1066.8 L2528.4 1053.7ZM2549.8 1013.1 L2566.7 1003.9 L2612.6 1004.6 L2663.4 1015.0 L2690.7 1029.8 L2675.7 1040.2 L2625.6 1039.4 L2572.9 1027.8ZM2589.4 991.5 L2604.6 983.1 L2648.2 983.8 L2697.1 993.1 L2724.1 1006.4 L2710.7 1015.7 L2663.4 1015.0 L2612.6 1004.6ZM2277.9 1061.2 L2303.5 1049.7 L2354.1 1050.6 L2403.4 1063.5 L2423.7 1082.0 L2399.5 1095.3 L2343.8 1094.2 L2293.1 1079.5ZM2337.7 1034.4 L2360.4 1024.2 L2408.2 1025.0 L2456.1 1036.4 L2477.1 1052.8 L2455.8 1064.5 L2403.4 1063.5 L2354.1 1050.6ZM2390.8 1010.5 L2411.2 1001.4 L2456.5 1002.1 L2503.0 1012.3 L2524.5 1026.9 L2505.5 1037.3 L2456.1 1036.4 L2408.2 1025.0ZM2438.5 989.1 L2456.8 980.9 L2499.9 981.6 L2545.0 990.8 L2566.7 1003.9 L2549.8 1013.1 L2503.0 1012.3 L2456.5 1002.1ZM2024.0 1087.9 L2057.7 1075.0 L2110.7 1076.0 L2155.5 1090.5 L2166.4 1111.3 L2133.2 1126.2 L2074.7 1124.9 L2029.4 1108.4ZM2102.5 1058.0 L2132.3 1046.6 L2182.2 1047.5 L2226.3 1060.3 L2239.4 1078.5 L2210.3 1091.6 L2155.5 1090.5 L2110.7 1076.0ZM2172.0 1031.5 L2198.5 1021.4 L2245.7 1022.2 L2288.9 1033.5 L2303.5 1049.7 L2277.9 1061.2 L2226.3 1060.3 L2182.2 1047.5ZM2233.9 1007.9 L2257.6 998.9 L2302.4 999.6 L2344.7 1009.8 L2360.4 1024.2 L2337.7 1034.4 L2288.9 1033.5 L2245.7 1022.2ZM2289.4 986.8 L2310.7 978.7 L2353.3 979.3 L2394.6 988.4 L2411.2 1001.4 L2390.8 1010.5 L2344.7 1009.8 L2302.4 999.6ZM1738.9 1117.8 L1782.6 1103.4 L1838.1 1104.5 L1876.9 1120.7 L1876.0 1144.2 L1831.6 1161.2 L1769.9 1159.8 L1731.9 1141.0ZM1840.4 1084.3 L1878.7 1071.6 L1930.9 1072.6 L1970.0 1086.8 L1973.0 1107.3 L1934.5 1122.0 L1876.9 1120.7 L1838.1 1104.5ZM1929.6 1054.8 L1963.4 1043.6 L2012.7 1044.5 L2051.6 1057.0 L2057.7 1075.0 L2024.0 1087.9 L1970.0 1086.8 L1930.9 1072.6ZM2008.5 1028.7 L2038.6 1018.7 L2085.2 1019.5 L2123.9 1030.7 L2132.3 1046.6 L2102.5 1058.0 L2051.6 1057.0 L2012.7 1044.5ZM2078.9 1005.4 L2105.9 996.5 L2150.1 997.2 L2188.3 1007.2 L2198.5 1021.4 L2172.0 1031.5 L2123.9 1030.7 L2085.2 1019.5ZM2142.0 984.5 L2166.3 976.5 L2208.4 977.2 L2246.0 986.2 L2257.6 998.9 L2233.9 1007.9 L2188.3 1007.2 L2150.1 997.2ZM1659.6 1080.7 L1702.3 1068.2 L1753.7 1069.2 L1787.2 1083.2 L1782.6 1103.4 L1738.9 1117.8 L1682.2 1116.6 L1649.7 1100.6ZM1759.0 1051.6 L1796.8 1040.6 L1845.4 1041.5 L1879.4 1053.9 L1878.7 1071.6 L1840.4 1084.3 L1787.2 1083.2 L1753.7 1069.2ZM1847.2 1025.9 L1880.8 1016.1 L1926.8 1016.8 L1961.1 1027.9 L1963.4 1043.6 L1929.6 1054.8 L1879.4 1053.9 L1845.4 1041.5ZM1925.8 1002.9 L1956.0 994.1 L1999.7 994.8 L2033.9 1004.7 L2038.6 1018.7 L2008.5 1028.7 L1961.1 1027.9 L1926.8 1016.8ZM1996.4 982.3 L2023.6 974.4 L2065.2 975.0 L2099.2 983.9 L2105.9 996.5 L2078.9 1005.4 L2033.9 1004.7 L1999.7 994.8ZM1481.4 1077.2 L1528.4 1064.9 L1579.0 1065.9 L1607.1 1079.7 L1595.1 1099.5 L1546.4 1113.7 L1490.6 1112.6 L1464.3 1096.8ZM1590.8 1048.5 L1632.4 1037.6 L1680.4 1038.5 L1709.5 1050.7 L1702.3 1068.2 L1659.6 1080.7 L1607.1 1079.7 L1579.0 1065.9ZM1687.9 1023.1 L1725.0 1013.4 L1770.4 1014.2 L1800.3 1025.1 L1796.8 1040.6 L1759.0 1051.6 L1709.5 1050.7 L1680.4 1038.5ZM1774.6 1000.4 L1807.9 991.7 L1851.1 992.4 L1881.3 1002.2 L1880.8 1016.1 L1847.2 1025.9 L1800.3 1025.1 L1770.4 1014.2ZM1852.5 980.1 L1882.5 972.2 L1923.6 972.8 L1954.1 981.6 L1956.0 994.1 L1925.8 1002.9 L1881.3 1002.2 L1851.1 992.4ZM1305.7 1073.7 L1356.9 1061.6 L1406.9 1062.6 L1429.6 1076.2 L1410.5 1095.7 L1356.9 1109.7 L1302.0 1108.6 L1281.6 1093.1ZM1424.9 1045.5 L1470.2 1034.7 L1517.5 1035.6 L1542.0 1047.6 L1528.4 1064.9 L1481.4 1077.2 L1429.6 1076.2 L1406.9 1062.6ZM1530.7 1020.4 L1571.1 1010.8 L1616.0 1011.6 L1641.7 1022.3 L1632.4 1037.6 L1590.8 1048.5 L1542.0 1047.6 L1517.5 1035.6ZM1625.3 998.0 L1661.5 989.4 L1704.2 990.1 L1730.7 999.7 L1725.0 1013.4 L1687.9 1023.1 L1641.7 1022.3 L1616.0 1011.6ZM1710.2 977.9 L1743.0 970.1 L1783.6 970.7 L1810.6 979.4 L1807.9 991.7 L1774.6 1000.4 L1730.7 999.7 L1704.2 990.1ZM1261.3 1042.4 L1310.2 1031.9 L1356.9 1032.7 L1376.8 1044.6 L1356.9 1061.6 L1305.7 1073.7 L1254.8 1072.7 L1237.1 1059.3ZM1375.5 1017.7 L1419.2 1008.3 L1463.5 1009.0 L1485.1 1019.6 L1470.2 1034.7 L1424.9 1045.5 L1376.8 1044.6 L1356.9 1032.7ZM1477.7 995.6 L1516.9 987.1 L1559.1 987.8 L1581.9 997.3 L1571.1 1010.8 L1530.7 1020.4 L1485.1 1019.6 L1463.5 1009.0ZM1099.8 1039.5 L1152.2 1029.0 L1198.3 1029.8 L1213.7 1041.6 L1187.8 1058.4 L1132.6 1070.3 L1082.4 1069.3 L1069.7 1056.1ZM1222.3 1015.1 L1269.2 1005.7 L1312.9 1006.5 L1330.4 1016.9 L1310.2 1031.9 L1261.3 1042.4 L1213.7 1041.6 L1198.3 1029.8ZM1331.9 993.2 L1374.0 984.8 L1415.7 985.5 L1434.8 994.9 L1419.2 1008.3 L1375.5 1017.7 L1330.4 1016.9 L1312.9 1006.5ZM940.5 1036.5 L996.4 1026.2 L1041.8 1027.0 L1052.9 1038.6 L1021.1 1055.2 L962.0 1066.9 L912.5 1066.0 L904.6 1052.9ZM1071.0 1012.4 L1121.0 1003.2 L1164.2 1003.9 L1177.8 1014.3 L1152.2 1029.0 L1099.8 1039.5 L1052.9 1038.6 L1041.8 1027.0ZM1187.9 990.9 L1232.8 982.6 L1274.0 983.2 L1289.6 992.5 L1269.2 1005.7 L1222.3 1015.1 L1177.8 1014.3 L1164.2 1003.9ZM921.6 1009.8 L974.6 1000.7 L1017.3 1001.5 L1027.1 1011.7 L996.4 1026.2 L940.5 1036.5 L894.2 1035.7 L887.4 1024.3ZM1045.6 988.5 L1093.2 980.3 L1133.9 981.0 L1146.0 990.2 L1121.0 1003.2 L1071.0 1012.4 L1027.1 1011.7 L1017.3 1001.5ZM905.0 986.2 L955.3 978.1 L995.5 978.8 L1004.2 987.8 L974.6 1000.7 L921.6 1009.8 L878.2 1009.1 L872.2 999.0Z" fill="none" stroke="#d3cfcb" stroke-width="1.5" transform="translate(0 -0.8)" stroke-linejoin="round"/>
<path d="M2540.5 1134.8 L2562.5 1119.4 L2621.5 1120.6 L2687.6 1137.9 L2724.6 1163.0 L2705.8 1181.1 L2639.7 1179.6 L2570.3 1159.6ZM2591.5 1099.1 L2610.8 1085.6 L2666.1 1086.7 L2729.1 1101.8 L2765.3 1123.6 L2749.1 1139.2 L2687.6 1137.9 L2621.5 1120.6ZM2636.2 1067.8 L2653.2 1056.0 L2705.2 1056.9 L2765.4 1070.2 L2800.6 1089.3 L2786.6 1102.9 L2729.1 1101.8 L2666.1 1086.7ZM2675.7 1040.2 L2690.7 1029.8 L2739.8 1030.6 L2797.4 1042.4 L2831.6 1059.2 L2819.3 1071.2 L2765.4 1070.2 L2705.2 1056.9ZM2261.1 1171.0 L2293.1 1153.5 L2355.4 1154.8 L2416.5 1174.5 L2442.5 1203.3 L2412.7 1224.1 L2342.5 1222.4 L2279.2 1199.3ZM2335.2 1130.4 L2362.9 1115.3 L2421.0 1116.5 L2480.0 1133.5 L2507.0 1158.2 L2481.5 1176.0 L2416.5 1174.5 L2355.4 1154.8ZM2399.5 1095.3 L2423.7 1082.0 L2478.2 1083.1 L2535.0 1098.0 L2562.5 1119.4 L2540.5 1134.8 L2480.0 1133.5 L2421.0 1116.5ZM2455.8 1064.5 L2477.1 1052.8 L2528.4 1053.7 L2583.1 1066.8 L2610.8 1085.6 L2591.5 1099.1 L2535.0 1098.0 L2478.2 1083.1ZM1941.1 1212.4 L1985.9 1192.3 L2051.7 1193.9 L2105.8 1216.5 L2117.1 1249.7 L2072.7 1274.0 L1997.9 1272.0 L1943.5 1245.2ZM2044.4 1166.0 L2082.8 1148.8 L2144.0 1150.2 L2197.2 1169.5 L2212.1 1197.7 L2174.6 1218.2 L2105.8 1216.5 L2051.7 1193.9ZM2133.2 1126.2 L2166.4 1111.3 L2223.7 1112.4 L2275.7 1129.2 L2293.1 1153.5 L2261.1 1171.0 L2197.2 1169.5 L2144.0 1150.2ZM2210.3 1091.6 L2239.4 1078.5 L2293.1 1079.5 L2343.8 1094.2 L2362.9 1115.3 L2335.2 1130.4 L2275.7 1129.2 L2223.7 1112.4ZM1711.9 1206.7 L1763.7 1187.0 L1828.4 1188.5 L1873.5 1210.8 L1872.3 1243.3 L1819.3 1267.1 L1746.1 1265.1 L1702.1 1238.9ZM1831.6 1161.2 L1876.0 1144.2 L1936.2 1145.6 L1981.7 1164.6 L1985.9 1192.3 L1941.1 1212.4 L1873.5 1210.8 L1828.4 1188.5ZM1934.5 1122.0 L1973.0 1107.3 L2029.4 1108.4 L2074.7 1124.9 L2082.8 1148.8 L2044.4 1166.0 L1981.7 1164.6 L1936.2 1145.6ZM1486.9 1201.2 L1545.5 1181.8 L1609.0 1183.3 L1645.6 1205.1 L1632.3 1237.0 L1571.1 1260.4 L1499.3 1258.4 L1465.4 1232.7ZM1622.3 1156.4 L1672.6 1139.7 L1731.9 1141.0 L1769.9 1159.8 L1763.7 1187.0 L1711.9 1206.7 L1645.6 1205.1 L1609.0 1183.3ZM1266.0 1195.7 L1331.2 1176.6 L1393.6 1178.1 L1421.8 1199.5 L1397.0 1230.9 L1327.8 1253.8 L1257.5 1251.8 L1233.3 1226.6ZM1416.6 1151.7 L1472.6 1135.3 L1530.9 1136.6 L1561.7 1155.0 L1545.5 1181.8 L1486.9 1201.2 L1421.8 1199.5 L1393.6 1178.1ZM1546.4 1113.7 L1595.1 1099.5 L1649.7 1100.6 L1682.2 1116.6 L1672.6 1139.7 L1622.3 1156.4 L1561.7 1155.0 L1530.9 1136.6ZM1214.3 1147.1 L1275.8 1131.0 L1333.1 1132.2 L1357.0 1150.3 L1331.2 1176.6 L1266.0 1195.7 L1202.1 1194.1 L1181.9 1173.0ZM1356.9 1109.7 L1410.5 1095.7 L1464.3 1096.8 L1490.6 1112.6 L1472.6 1135.3 L1416.6 1151.7 L1357.0 1150.3 L1333.1 1132.2ZM1015.4 1142.5 L1082.2 1126.7 L1138.6 1127.9 L1155.7 1145.7 L1120.6 1171.6 L1049.1 1190.3 L986.3 1188.7 L973.9 1168.1ZM1170.4 1105.8 L1228.6 1092.0 L1281.6 1093.1 L1302.0 1108.6 L1275.8 1131.0 L1214.3 1147.1 L1155.7 1145.7 L1138.6 1127.9ZM819.7 1138.0 L891.7 1122.5 L947.2 1123.7 L957.7 1141.2 L913.7 1166.6 L836.1 1185.0 L774.4 1183.5 L769.5 1163.2ZM986.7 1101.9 L1049.4 1088.3 L1101.6 1089.4 L1116.3 1104.6 L1082.2 1126.7 L1015.4 1142.5 L957.7 1141.2 L947.2 1123.7ZM1132.6 1070.3 L1187.8 1058.4 L1237.1 1059.3 L1254.8 1072.7 L1228.6 1092.0 L1170.4 1105.8 L1116.3 1104.6 L1101.6 1089.4ZM805.8 1098.1 L872.9 1084.7 L924.4 1085.7 L933.4 1100.8 L891.7 1122.5 L819.7 1138.0 L763.0 1136.8 L758.8 1119.5ZM962.0 1066.9 L1021.1 1055.2 L1069.7 1056.1 L1082.4 1069.3 L1049.4 1088.3 L986.7 1101.9 L933.4 1100.8 L924.4 1085.7ZM793.8 1063.6 L856.7 1052.0 L904.6 1052.9 L912.5 1066.0 L872.9 1084.7 L805.8 1098.1 L753.3 1097.0 L749.7 1082.2Z" fill="none" stroke="#aca8a5" stroke-width="4" stroke-linejoin="round"/>
<path d="M2540.5 1134.8 L2562.5 1119.4 L2621.5 1120.6 L2687.6 1137.9 L2724.6 1163.0 L2705.8 1181.1 L2639.7 1179.6 L2570.3 1159.6ZM2591.5 1099.1 L2610.8 1085.6 L2666.1 1086.7 L2729.1 1101.8 L2765.3 1123.6 L2749.1 1139.2 L2687.6 1137.9 L2621.5 1120.6ZM2636.2 1067.8 L2653.2 1056.0 L2705.2 1056.9 L2765.4 1070.2 L2800.6 1089.3 L2786.6 1102.9 L2729.1 1101.8 L2666.1 1086.7ZM2675.7 1040.2 L2690.7 1029.8 L2739.8 1030.6 L2797.4 1042.4 L2831.6 1059.2 L2819.3 1071.2 L2765.4 1070.2 L2705.2 1056.9ZM2261.1 1171.0 L2293.1 1153.5 L2355.4 1154.8 L2416.5 1174.5 L2442.5 1203.3 L2412.7 1224.1 L2342.5 1222.4 L2279.2 1199.3ZM2335.2 1130.4 L2362.9 1115.3 L2421.0 1116.5 L2480.0 1133.5 L2507.0 1158.2 L2481.5 1176.0 L2416.5 1174.5 L2355.4 1154.8ZM2399.5 1095.3 L2423.7 1082.0 L2478.2 1083.1 L2535.0 1098.0 L2562.5 1119.4 L2540.5 1134.8 L2480.0 1133.5 L2421.0 1116.5ZM2455.8 1064.5 L2477.1 1052.8 L2528.4 1053.7 L2583.1 1066.8 L2610.8 1085.6 L2591.5 1099.1 L2535.0 1098.0 L2478.2 1083.1ZM1941.1 1212.4 L1985.9 1192.3 L2051.7 1193.9 L2105.8 1216.5 L2117.1 1249.7 L2072.7 1274.0 L1997.9 1272.0 L1943.5 1245.2ZM2044.4 1166.0 L2082.8 1148.8 L2144.0 1150.2 L2197.2 1169.5 L2212.1 1197.7 L2174.6 1218.2 L2105.8 1216.5 L2051.7 1193.9ZM2133.2 1126.2 L2166.4 1111.3 L2223.7 1112.4 L2275.7 1129.2 L2293.1 1153.5 L2261.1 1171.0 L2197.2 1169.5 L2144.0 1150.2ZM2210.3 1091.6 L2239.4 1078.5 L2293.1 1079.5 L2343.8 1094.2 L2362.9 1115.3 L2335.2 1130.4 L2275.7 1129.2 L2223.7 1112.4ZM1711.9 1206.7 L1763.7 1187.0 L1828.4 1188.5 L1873.5 1210.8 L1872.3 1243.3 L1819.3 1267.1 L1746.1 1265.1 L1702.1 1238.9ZM1831.6 1161.2 L1876.0 1144.2 L1936.2 1145.6 L1981.7 1164.6 L1985.9 1192.3 L1941.1 1212.4 L1873.5 1210.8 L1828.4 1188.5ZM1934.5 1122.0 L1973.0 1107.3 L2029.4 1108.4 L2074.7 1124.9 L2082.8 1148.8 L2044.4 1166.0 L1981.7 1164.6 L1936.2 1145.6ZM1486.9 1201.2 L1545.5 1181.8 L1609.0 1183.3 L1645.6 1205.1 L1632.3 1237.0 L1571.1 1260.4 L1499.3 1258.4 L1465.4 1232.7ZM1622.3 1156.4 L1672.6 1139.7 L1731.9 1141.0 L1769.9 1159.8 L1763.7 1187.0 L1711.9 1206.7 L1645.6 1205.1 L1609.0 1183.3ZM1266.0 1195.7 L1331.2 1176.6 L1393.6 1178.1 L1421.8 1199.5 L1397.0 1230.9 L1327.8 1253.8 L1257.5 1251.8 L1233.3 1226.6ZM1416.6 1151.7 L1472.6 1135.3 L1530.9 1136.6 L1561.7 1155.0 L1545.5 1181.8 L1486.9 1201.2 L1421.8 1199.5 L1393.6 1178.1ZM1546.4 1113.7 L1595.1 1099.5 L1649.7 1100.6 L1682.2 1116.6 L1672.6 1139.7 L1622.3 1156.4 L1561.7 1155.0 L1530.9 1136.6ZM1214.3 1147.1 L1275.8 1131.0 L1333.1 1132.2 L1357.0 1150.3 L1331.2 1176.6 L1266.0 1195.7 L1202.1 1194.1 L1181.9 1173.0ZM1356.9 1109.7 L1410.5 1095.7 L1464.3 1096.8 L1490.6 1112.6 L1472.6 1135.3 L1416.6 1151.7 L1357.0 1150.3 L1333.1 1132.2ZM1015.4 1142.5 L1082.2 1126.7 L1138.6 1127.9 L1155.7 1145.7 L1120.6 1171.6 L1049.1 1190.3 L986.3 1188.7 L973.9 1168.1ZM1170.4 1105.8 L1228.6 1092.0 L1281.6 1093.1 L1302.0 1108.6 L1275.8 1131.0 L1214.3 1147.1 L1155.7 1145.7 L1138.6 1127.9ZM819.7 1138.0 L891.7 1122.5 L947.2 1123.7 L957.7 1141.2 L913.7 1166.6 L836.1 1185.0 L774.4 1183.5 L769.5 1163.2ZM986.7 1101.9 L1049.4 1088.3 L1101.6 1089.4 L1116.3 1104.6 L1082.2 1126.7 L1015.4 1142.5 L957.7 1141.2 L947.2 1123.7ZM1132.6 1070.3 L1187.8 1058.4 L1237.1 1059.3 L1254.8 1072.7 L1228.6 1092.0 L1170.4 1105.8 L1116.3 1104.6 L1101.6 1089.4ZM805.8 1098.1 L872.9 1084.7 L924.4 1085.7 L933.4 1100.8 L891.7 1122.5 L819.7 1138.0 L763.0 1136.8 L758.8 1119.5ZM962.0 1066.9 L1021.1 1055.2 L1069.7 1056.1 L1082.4 1069.3 L1049.4 1088.3 L986.7 1101.9 L933.4 1100.8 L924.4 1085.7ZM793.8 1063.6 L856.7 1052.0 L904.6 1052.9 L912.5 1066.0 L872.9 1084.7 L805.8 1098.1 L753.3 1097.0 L749.7 1082.2Z" fill="none" stroke="#d3cfcb" stroke-width="1.5" transform="translate(0 -1.1)" stroke-linejoin="round"/>
<path d="M2655.3 1230.2 L2677.2 1208.9 L2746.8 1210.6 L2829.7 1234.5 L2881.5 1269.7 L2865.1 1295.5 L2785.5 1293.4 L2697.1 1264.9ZM2705.8 1181.1 L2724.6 1163.0 L2789.0 1164.4 L2866.9 1184.8 L2916.3 1214.6 L2902.6 1236.3 L2829.7 1234.5 L2746.8 1210.6ZM2749.1 1139.2 L2765.3 1123.6 L2825.3 1124.8 L2898.7 1142.4 L2945.9 1167.9 L2934.2 1186.4 L2866.9 1184.8 L2789.0 1164.4ZM2331.3 1281.0 L2366.7 1256.2 L2440.8 1258.2 L2517.5 1286.1 L2554.9 1327.4 L2523.4 1358.0 L2437.8 1355.4 L2357.3 1321.8ZM2412.7 1224.1 L2442.5 1203.3 L2510.8 1204.9 L2583.7 1228.4 L2621.5 1262.9 L2595.4 1288.2 L2517.5 1286.1 L2440.8 1258.2ZM2481.5 1176.0 L2507.0 1158.2 L2570.3 1159.6 L2639.7 1179.6 L2677.2 1208.9 L2655.3 1230.2 L2583.7 1228.4 L2510.8 1204.9ZM1950.5 1340.8 L2003.9 1311.6 L2083.1 1313.9 L2150.0 1346.8 L2166.8 1396.1 L2114.2 1432.8 L2021.7 1429.7 L1954.0 1389.3ZM2072.7 1274.0 L2117.1 1249.7 L2189.7 1251.6 L2255.0 1279.0 L2276.4 1319.4 L2233.6 1349.3 L2150.0 1346.8 L2083.1 1313.9ZM2174.6 1218.2 L2212.1 1197.7 L2279.2 1199.3 L2342.5 1222.4 L2366.7 1256.2 L2331.3 1281.0 L2255.0 1279.0 L2189.7 1251.6ZM1673.6 1332.5 L1737.3 1303.9 L1814.8 1306.2 L1868.7 1338.4 L1866.9 1386.5 L1801.4 1422.3 L1711.2 1419.3 L1659.2 1379.9ZM1819.3 1267.1 L1872.3 1243.3 L1943.5 1245.2 L1997.9 1272.0 L2003.9 1311.6 L1950.5 1340.8 L1868.7 1338.4 L1814.8 1306.2ZM1571.1 1260.4 L1632.3 1237.0 L1702.1 1238.9 L1746.1 1265.1 L1737.3 1303.9 L1673.6 1332.5 L1593.7 1330.1 L1552.2 1298.6ZM1327.8 1253.8 L1397.0 1230.9 L1465.4 1232.7 L1499.3 1258.4 L1476.4 1296.4 L1403.0 1324.4 L1324.8 1322.0 L1295.2 1291.2ZM1089.4 1247.3 L1166.1 1224.9 L1233.3 1226.6 L1257.5 1251.8 L1221.0 1289.1 L1138.2 1316.4 L1061.8 1314.1 L1043.6 1284.0ZM855.6 1240.9 L939.6 1218.9 L1005.5 1220.7 L1020.4 1245.4 L970.9 1281.9 L879.2 1308.7 L804.4 1306.4 L797.2 1276.9ZM1049.1 1190.3 L1120.6 1171.6 L1181.9 1173.0 L1202.1 1194.1 L1166.1 1224.9 L1089.4 1247.3 L1020.4 1245.4 L1005.5 1220.7ZM836.1 1185.0 L913.7 1166.6 L973.9 1168.1 L986.3 1188.7 L939.6 1218.9 L855.6 1240.9 L788.0 1239.1 L782.1 1214.8Z" fill="none" stroke="#aca8a5" stroke-width="5" stroke-linejoin="round"/>
<path d="M2655.3 1230.2 L2677.2 1208.9 L2746.8 1210.6 L2829.7 1234.5 L2881.5 1269.7 L2865.1 1295.5 L2785.5 1293.4 L2697.1 1264.9ZM2705.8 1181.1 L2724.6 1163.0 L2789.0 1164.4 L2866.9 1184.8 L2916.3 1214.6 L2902.6 1236.3 L2829.7 1234.5 L2746.8 1210.6ZM2749.1 1139.2 L2765.3 1123.6 L2825.3 1124.8 L2898.7 1142.4 L2945.9 1167.9 L2934.2 1186.4 L2866.9 1184.8 L2789.0 1164.4ZM2331.3 1281.0 L2366.7 1256.2 L2440.8 1258.2 L2517.5 1286.1 L2554.9 1327.4 L2523.4 1358.0 L2437.8 1355.4 L2357.3 1321.8ZM2412.7 1224.1 L2442.5 1203.3 L2510.8 1204.9 L2583.7 1228.4 L2621.5 1262.9 L2595.4 1288.2 L2517.5 1286.1 L2440.8 1258.2ZM2481.5 1176.0 L2507.0 1158.2 L2570.3 1159.6 L2639.7 1179.6 L2677.2 1208.9 L2655.3 1230.2 L2583.7 1228.4 L2510.8 1204.9ZM1950.5 1340.8 L2003.9 1311.6 L2083.1 1313.9 L2150.0 1346.8 L2166.8 1396.1 L2114.2 1432.8 L2021.7 1429.7 L1954.0 1389.3ZM2072.7 1274.0 L2117.1 1249.7 L2189.7 1251.6 L2255.0 1279.0 L2276.4 1319.4 L2233.6 1349.3 L2150.0 1346.8 L2083.1 1313.9ZM2174.6 1218.2 L2212.1 1197.7 L2279.2 1199.3 L2342.5 1222.4 L2366.7 1256.2 L2331.3 1281.0 L2255.0 1279.0 L2189.7 1251.6ZM1673.6 1332.5 L1737.3 1303.9 L1814.8 1306.2 L1868.7 1338.4 L1866.9 1386.5 L1801.4 1422.3 L1711.2 1419.3 L1659.2 1379.9ZM1819.3 1267.1 L1872.3 1243.3 L1943.5 1245.2 L1997.9 1272.0 L2003.9 1311.6 L1950.5 1340.8 L1868.7 1338.4 L1814.8 1306.2ZM1571.1 1260.4 L1632.3 1237.0 L1702.1 1238.9 L1746.1 1265.1 L1737.3 1303.9 L1673.6 1332.5 L1593.7 1330.1 L1552.2 1298.6ZM1327.8 1253.8 L1397.0 1230.9 L1465.4 1232.7 L1499.3 1258.4 L1476.4 1296.4 L1403.0 1324.4 L1324.8 1322.0 L1295.2 1291.2ZM1089.4 1247.3 L1166.1 1224.9 L1233.3 1226.6 L1257.5 1251.8 L1221.0 1289.1 L1138.2 1316.4 L1061.8 1314.1 L1043.6 1284.0ZM855.6 1240.9 L939.6 1218.9 L1005.5 1220.7 L1020.4 1245.4 L970.9 1281.9 L879.2 1308.7 L804.4 1306.4 L797.2 1276.9ZM1049.1 1190.3 L1120.6 1171.6 L1181.9 1173.0 L1202.1 1194.1 L1166.1 1224.9 L1089.4 1247.3 L1020.4 1245.4 L1005.5 1220.7ZM836.1 1185.0 L913.7 1166.6 L973.9 1168.1 L986.3 1188.7 L939.6 1218.9 L855.6 1240.9 L788.0 1239.1 L782.1 1214.8Z" fill="none" stroke="#d3cfcb" stroke-width="1.5" transform="translate(0 -1.4)" stroke-linejoin="round"/>
<path d="M2523.4 1358.0 L2554.9 1327.4 L2637.7 1329.8 L2732.3 1364.3 L2788.9 1416.0 L2764.4 1454.6 L2667.1 1451.4 L2565.4 1408.8ZM2595.4 1288.2 L2621.5 1262.9 L2697.1 1264.9 L2785.5 1293.4 L2839.7 1335.6 L2819.9 1366.9 L2732.3 1364.3 L2637.7 1329.8ZM2233.6 1349.3 L2276.4 1319.4 L2357.3 1321.8 L2437.8 1355.4 L2474.0 1405.9 L2435.1 1443.6 L2340.2 1440.4 L2256.0 1398.9ZM1801.4 1422.3 L1866.9 1386.5 L1954.0 1389.3 L2021.7 1429.7 L2031.0 1491.0 L1964.8 1537.3 L1861.4 1533.4 L1794.4 1482.5ZM1496.3 1412.1 L1574.2 1377.1 L1659.2 1379.9 L1711.2 1419.3 L1697.7 1479.0 L1615.4 1524.0 L1514.9 1520.2 L1467.5 1470.7ZM1403.0 1324.4 L1476.4 1296.4 L1552.2 1298.6 L1593.7 1330.1 L1574.2 1377.1 L1496.3 1412.1 L1408.4 1409.2 L1371.5 1370.6ZM1138.2 1316.4 L1221.0 1289.1 L1295.2 1291.2 L1324.8 1322.0 L1288.4 1368.0 L1198.8 1402.1 L1113.0 1399.3 L1090.4 1361.7ZM879.2 1308.7 L970.9 1281.9 L1043.6 1284.0 L1061.8 1314.1 L1009.3 1359.1 L908.4 1392.4 L824.7 1389.6 L815.8 1352.9Z" fill="none" stroke="#aca8a5" stroke-width="6" stroke-linejoin="round"/>
<path d="M2523.4 1358.0 L2554.9 1327.4 L2637.7 1329.8 L2732.3 1364.3 L2788.9 1416.0 L2764.4 1454.6 L2667.1 1451.4 L2565.4 1408.8ZM2595.4 1288.2 L2621.5 1262.9 L2697.1 1264.9 L2785.5 1293.4 L2839.7 1335.6 L2819.9 1366.9 L2732.3 1364.3 L2637.7 1329.8ZM2233.6 1349.3 L2276.4 1319.4 L2357.3 1321.8 L2437.8 1355.4 L2474.0 1405.9 L2435.1 1443.6 L2340.2 1440.4 L2256.0 1398.9ZM1801.4 1422.3 L1866.9 1386.5 L1954.0 1389.3 L2021.7 1429.7 L2031.0 1491.0 L1964.8 1537.3 L1861.4 1533.4 L1794.4 1482.5ZM1496.3 1412.1 L1574.2 1377.1 L1659.2 1379.9 L1711.2 1419.3 L1697.7 1479.0 L1615.4 1524.0 L1514.9 1520.2 L1467.5 1470.7ZM1403.0 1324.4 L1476.4 1296.4 L1552.2 1298.6 L1593.7 1330.1 L1574.2 1377.1 L1496.3 1412.1 L1408.4 1409.2 L1371.5 1370.6ZM1138.2 1316.4 L1221.0 1289.1 L1295.2 1291.2 L1324.8 1322.0 L1288.4 1368.0 L1198.8 1402.1 L1113.0 1399.3 L1090.4 1361.7ZM879.2 1308.7 L970.9 1281.9 L1043.6 1284.0 L1061.8 1314.1 L1009.3 1359.1 L908.4 1392.4 L824.7 1389.6 L815.8 1352.9Z" fill="none" stroke="#d3cfcb" stroke-width="1.8" transform="translate(0 -1.7)" stroke-linejoin="round"/>
<path d="M2435.1 1443.6 L2474.0 1405.9 L2565.4 1408.8 L2667.1 1451.4 L2725.5 1516.0 L2694.5 1565.0 L2585.0 1560.8 L2475.6 1507.0ZM2114.2 1432.8 L2166.8 1396.1 L2256.0 1398.9 L2340.2 1440.4 L2373.5 1503.3 L2324.3 1550.9 L2218.0 1546.9 L2130.3 1494.6ZM1615.4 1524.0 L1697.7 1479.0 L1794.4 1482.5 L1861.4 1533.4 L1858.5 1611.6 L1772.6 1671.7 L1655.4 1666.6 L1592.1 1600.7ZM1198.8 1402.1 L1288.4 1368.0 L1371.5 1370.6 L1408.4 1409.2 L1373.3 1467.3 L1275.8 1511.1 L1178.1 1507.4 L1149.1 1459.3ZM908.4 1392.4 L1009.3 1359.1 L1090.4 1361.7 L1113.0 1399.3 L1057.4 1456.0 L945.5 1498.6 L850.5 1495.0 L839.0 1448.1Z" fill="none" stroke="#aca8a5" stroke-width="7" stroke-linejoin="round"/>
<path d="M2435.1 1443.6 L2474.0 1405.9 L2565.4 1408.8 L2667.1 1451.4 L2725.5 1516.0 L2694.5 1565.0 L2585.0 1560.8 L2475.6 1507.0ZM2114.2 1432.8 L2166.8 1396.1 L2256.0 1398.9 L2340.2 1440.4 L2373.5 1503.3 L2324.3 1550.9 L2218.0 1546.9 L2130.3 1494.6ZM1615.4 1524.0 L1697.7 1479.0 L1794.4 1482.5 L1861.4 1533.4 L1858.5 1611.6 L1772.6 1671.7 L1655.4 1666.6 L1592.1 1600.7ZM1198.8 1402.1 L1288.4 1368.0 L1371.5 1370.6 L1408.4 1409.2 L1373.3 1467.3 L1275.8 1511.1 L1178.1 1507.4 L1149.1 1459.3ZM908.4 1392.4 L1009.3 1359.1 L1090.4 1361.7 L1113.0 1399.3 L1057.4 1456.0 L945.5 1498.6 L850.5 1495.0 L839.0 1448.1Z" fill="none" stroke="#d3cfcb" stroke-width="2.1" transform="translate(0 -2.0)" stroke-linejoin="round"/>
<path d="M2324.3 1550.9 L2373.5 1503.3 L2475.6 1507.0 L2585.0 1560.8 L2644.5 1644.0 L2603.9 1708.1 L2478.7 1702.6 L2360.9 1632.3ZM1964.8 1537.3 L2031.0 1491.0 L2130.3 1494.6 L2218.0 1546.9 L2245.3 1627.5 L2181.3 1689.6 L2060.2 1684.3 L1970.5 1616.2ZM1275.8 1511.1 L1373.3 1467.3 L1467.5 1470.7 L1514.9 1520.2 L1483.5 1596.2 L1377.0 1654.4 L1263.5 1649.4 L1225.1 1585.6ZM945.5 1498.6 L1057.4 1456.0 L1149.1 1459.3 L1178.1 1507.4 L1119.7 1581.2 L994.0 1637.7 L884.1 1632.8 L869.0 1570.9Z" fill="none" stroke="#aca8a5" stroke-width="8" stroke-linejoin="round"/>
<path d="M2324.3 1550.9 L2373.5 1503.3 L2475.6 1507.0 L2585.0 1560.8 L2644.5 1644.0 L2603.9 1708.1 L2478.7 1702.6 L2360.9 1632.3ZM1964.8 1537.3 L2031.0 1491.0 L2130.3 1494.6 L2218.0 1546.9 L2245.3 1627.5 L2181.3 1689.6 L2060.2 1684.3 L1970.5 1616.2ZM1275.8 1511.1 L1373.3 1467.3 L1467.5 1470.7 L1514.9 1520.2 L1483.5 1596.2 L1377.0 1654.4 L1263.5 1649.4 L1225.1 1585.6ZM945.5 1498.6 L1057.4 1456.0 L1149.1 1459.3 L1178.1 1507.4 L1119.7 1581.2 L994.0 1637.7 L884.1 1632.8 L869.0 1570.9Z" fill="none" stroke="#d3cfcb" stroke-width="2.4" transform="translate(0 -2.2)" stroke-linejoin="round"/>
<path d="M2694.5 1565.0 L2725.5 1516.0 L2830.5 1519.8 L2962.9 1575.2 L3056.7 1660.9 L3041.2 1727.2 L2911.5 1721.5 L2763.9 1648.9ZM1772.6 1671.7 L1858.5 1611.6 L1970.5 1616.2 L2060.2 1684.3 L2076.3 1791.3 L1989.5 1875.6 L1848.9 1868.3 L1760.5 1776.2ZM1377.0 1654.4 L1483.5 1596.2 L1592.1 1600.7 L1655.4 1666.6 L1632.0 1770.0 L1516.0 1851.1 L1380.7 1844.1 L1327.3 1755.4ZM994.0 1637.7 L1119.7 1581.2 L1225.1 1585.6 L1263.5 1649.4 L1203.3 1749.4 L1060.2 1827.6 L930.0 1820.9 L909.1 1735.3Z" fill="none" stroke="#aca8a5" stroke-width="9" stroke-linejoin="round"/>
<path d="M2694.5 1565.0 L2725.5 1516.0 L2830.5 1519.8 L2962.9 1575.2 L3056.7 1660.9 L3041.2 1727.2 L2911.5 1721.5 L2763.9 1648.9ZM1772.6 1671.7 L1858.5 1611.6 L1970.5 1616.2 L2060.2 1684.3 L2076.3 1791.3 L1989.5 1875.6 L1848.9 1868.3 L1760.5 1776.2ZM1377.0 1654.4 L1483.5 1596.2 L1592.1 1600.7 L1655.4 1666.6 L1632.0 1770.0 L1516.0 1851.1 L1380.7 1844.1 L1327.3 1755.4ZM994.0 1637.7 L1119.7 1581.2 L1225.1 1585.6 L1263.5 1649.4 L1203.3 1749.4 L1060.2 1827.6 L930.0 1820.9 L909.1 1735.3Z" fill="none" stroke="#d3cfcb" stroke-width="2.7" transform="translate(0 -2.5)" stroke-linejoin="round"/>
<path d="M2181.3 1689.6 L2245.3 1627.5 L2360.9 1632.3 L2478.7 1702.6 L2537.2 1813.5 L2481.8 1901.0 L2335.6 1893.4 L2209.6 1797.7Z" fill="none" stroke="#aca8a5" stroke-width="10" stroke-linejoin="round"/>
<path d="M2181.3 1689.6 L2245.3 1627.5 L2360.9 1632.3 L2478.7 1702.6 L2537.2 1813.5 L2481.8 1901.0 L2335.6 1893.4 L2209.6 1797.7Z" fill="none" stroke="#d3cfcb" stroke-width="3.0" transform="translate(0 -2.8)" stroke-linejoin="round"/>
<path d="M2603.9 1708.1 L2644.5 1644.0 L2763.9 1648.9 L2911.5 1721.5 L3015.5 1836.4 L2994.2 1927.4 L2842.0 1919.5 L2675.5 1820.1Z" fill="none" stroke="#aca8a5" stroke-width="11" stroke-linejoin="round"/>
<path d="M2603.9 1708.1 L2644.5 1644.0 L2763.9 1648.9 L2911.5 1721.5 L3015.5 1836.4 L2994.2 1927.4 L2842.0 1919.5 L2675.5 1820.1Z" fill="none" stroke="#d3cfcb" stroke-width="3.3" transform="translate(0 -3.1)" stroke-linejoin="round"/>
<path d="M1989.5 1875.6 L2076.3 1791.3 L2209.6 1797.7 L2335.6 1893.4 L2388.3 2048.7 L2308.3 2175.1 L2132.6 2164.1 L2000.5 2026.3ZM1516.0 1851.1 L1632.0 1770.0 L1760.5 1776.2 L1848.9 1868.3 L1843.3 2017.2 L1718.7 2138.0 L1551.2 2127.5 L1472.0 1995.8ZM1060.2 1827.6 L1203.3 1749.4 L1327.3 1755.4 L1380.7 1844.1 L1321.4 1987.1 L1156.2 2102.7 L996.3 2092.6 L965.6 1966.6Z" fill="none" stroke="#aca8a5" stroke-width="12" stroke-linejoin="round"/>
<path d="M1989.5 1875.6 L2076.3 1791.3 L2209.6 1797.7 L2335.6 1893.4 L2388.3 2048.7 L2308.3 2175.1 L2132.6 2164.1 L2000.5 2026.3ZM1516.0 1851.1 L1632.0 1770.0 L1760.5 1776.2 L1848.9 1868.3 L1843.3 2017.2 L1718.7 2138.0 L1551.2 2127.5 L1472.0 1995.8ZM1060.2 1827.6 L1203.3 1749.4 L1327.3 1755.4 L1380.7 1844.1 L1321.4 1987.1 L1156.2 2102.7 L996.3 2092.6 L965.6 1966.6Z" fill="none" stroke="#d3cfcb" stroke-width="3.6" transform="translate(0 -3.4)" stroke-linejoin="round"/>
<path d="M2308.3 2175.1 L2388.3 2048.7 L2552.6 2058.1 L2742.6 2202.5 L2872.2 2447.8 L2822.7 2658.6 L2589.0 2639.8 L2370.1 2411.6ZM2481.8 1901.0 L2537.2 1813.5 L2675.5 1820.1 L2842.0 1919.5 L2958.1 2081.5 L2927.0 2214.1 L2742.6 2202.5 L2552.6 2058.1ZM1718.7 2138.0 L1843.3 2017.2 L2000.5 2026.3 L2132.6 2164.1 L2167.8 2397.0 L2042.0 2595.7 L1822.3 2578.0 L1692.7 2362.7ZM1156.2 2102.7 L1321.4 1987.1 L1472.0 1995.8 L1551.2 2127.5 L1501.2 2348.9 L1307.5 2536.6 L1100.6 2519.9 L1050.9 2316.4ZM619.0 2068.9 L821.2 1958.3 L965.6 1966.6 L996.3 2092.6 L869.3 2303.3 L615.4 2480.8 L420.1 2465.1 L442.0 2272.4ZM621.4 1805.0 L789.4 1729.5 L909.1 1735.3 L930.0 1820.9 L821.2 1958.3 L619.0 2068.9 L466.2 2059.3 L479.9 1938.6Z" fill="none" stroke="#aca8a5" stroke-width="13" stroke-linejoin="round"/>
<path d="M2308.3 2175.1 L2388.3 2048.7 L2552.6 2058.1 L2742.6 2202.5 L2872.2 2447.8 L2822.7 2658.6 L2589.0 2639.8 L2370.1 2411.6ZM2481.8 1901.0 L2537.2 1813.5 L2675.5 1820.1 L2842.0 1919.5 L2958.1 2081.5 L2927.0 2214.1 L2742.6 2202.5 L2552.6 2058.1ZM1718.7 2138.0 L1843.3 2017.2 L2000.5 2026.3 L2132.6 2164.1 L2167.8 2397.0 L2042.0 2595.7 L1822.3 2578.0 L1692.7 2362.7ZM1156.2 2102.7 L1321.4 1987.1 L1472.0 1995.8 L1551.2 2127.5 L1501.2 2348.9 L1307.5 2536.6 L1100.6 2519.9 L1050.9 2316.4ZM619.0 2068.9 L821.2 1958.3 L965.6 1966.6 L996.3 2092.6 L869.3 2303.3 L615.4 2480.8 L420.1 2465.1 L442.0 2272.4ZM621.4 1805.0 L789.4 1729.5 L909.1 1735.3 L930.0 1820.9 L821.2 1958.3 L619.0 2068.9 L466.2 2059.3 L479.9 1938.6Z" fill="none" stroke="#d3cfcb" stroke-width="3.9" transform="translate(0 -3.6)" stroke-linejoin="round"/>
<polygon points="2040,1098 2361,1205 2700,1318 2700,1462 2541,1362 2361,1282 2200,1262 2120,1240 2060,1180" fill="#5d6066"/>
<g fill="#d2cdc8"><polygon points="2392,1218 2440,1226 2446,1240 2398,1232"/><polygon points="2452,1230 2500,1238 2506,1252 2458,1244"/><polygon points="2512,1244 2560,1252 2566,1266 2518,1258"/><polygon points="2415,1248 2463,1256 2469,1270 2421,1262"/><polygon points="2475,1262 2523,1270 2529,1284 2481,1276"/><polygon points="2535,1276 2583,1284 2589,1298 2541,1290"/><polygon points="2520,1300 2568,1308 2574,1322 2526,1314"/><polygon points="2580,1314 2628,1322 2634,1336 2586,1328"/><polygon points="2570,1282 2618,1290 2624,1304 2576,1296"/><polygon points="2630,1300 2678,1308 2684,1322 2636,1314"/><polygon points="2600,1330 2648,1338 2654,1352 2606,1344"/></g>
<polygon points="2050,1150 2110,1180 2150,1230 2250,1270 2340,1285 2300,1230 2200,1180 2100,1140" fill="#6a6c72"/>
</g>
<polygon points="2696,1475 2215,2043 2285,2043 2696,1537" fill="#555a61"/>
<polygon points="2696,1537 2285,2043 2696,2043" fill="url(#lowgray)"/>
<polygon points="2555,1695 2696,1785 2696,1835 2580,1755" fill="#3f444a"/>
<polygon points="2530,1690 2555,1695 2580,1755 2550,1760" fill="#2f3439"/>
<polygon points="1300,1345 1365,1420 1400,1432 1460,1402 1386,1337" fill="#66696f"/>
<polygon points="1365,1218 1497,1171 1578,1222 1588,1346 1458,1400 1386,1337" fill="#b9c1c8"/>
<polygon points="1437,1268 1578,1222 1588,1346 1458,1400" fill="#a7b0b8"/>
<polygon points="1395,1211 1493,1180 1545,1217 1441,1254" fill="#4b555e"/>
<polygon points="1411,1226 1491,1200 1526,1224 1445,1252" fill="#c98a66"/>
<polygon points="1374,1244 1431,1278 1436,1382 1389,1335" fill="#3e4a55"/>
<polygon points="1382,1262 1428,1290 1433,1362 1395,1322" fill="#9a5a3e"/>
<polygon points="1460,1285 1562,1248 1571,1342 1473,1383" fill="#3e4a55"/>
<polygon points="1465,1297 1552,1262 1560,1332 1476,1368" fill="#7a412d"/>
<polygon points="953,1462 1049,1420 1087,1437 1114,1531 1100,1538 992,1585 953,1573" fill="#b9c1c8"/>
<polygon points="1049,1420 1087,1437 1114,1531 1100,1538 1083,1526 1068,1464" fill="#9aa3ab"/>
<polygon points="953,1482 1049,1440 1068,1464 968,1504" fill="#8a5a44"/>
<polygon points="968,1504 1068,1464 1083,1526 990,1563" fill="#6e3a27"/>
<polygon points="975,1518 1070,1482 1075,1500 980,1537" fill="#8a4a32" fill-opacity="0.7"/>
<polygon points="958,1386 971,1358 1006,1343 1061,1361 1083,1381 1081,1406 1029,1435 978,1420" fill="#b06b48"/>
<polygon points="1029,1390 1061,1361 1083,1381 1081,1406 1029,1435" fill="#9a5a3c"/>
<polygon points="972,1372 990,1352 1005,1356 988,1410 975,1405" fill="#c9d1d7"/><polygon points="1012,1360 1030,1352 1045,1360 1030,1428 1015,1422" fill="#c9d1d7"/>
<g fill="#f0c648"><polygon points="955,1420 995,1412 1008,1425 1005,1440 965,1450 953,1440"/><polygon points="955,1437 995,1430 1008,1442 1005,1457 965,1466 953,1456"/><polygon points="955,1452 995,1446 1008,1458 1005,1472 965,1480 953,1470"/>
<polygon points="1060,1537 1095,1532 1108,1543 1106,1556 1070,1563 1058,1552"/><polygon points="1062,1552 1097,1547 1110,1558 1108,1571 1072,1578 1060,1567"/><polygon points="972,1590 1008,1580 1022,1592 1018,1608 985,1620 970,1608"/></g>
<g fill="#a8701e"><rect x="955" y="1437" width="50" height="3"/><rect x="955" y="1453" width="50" height="3"/><rect x="1062" y="1553" width="45" height="3"/></g>
<polygon points="1696,1340 1743,1366 1790,1352 1769,1348" fill="#5e6066"/>
<polygon points="1720,1317 1769,1348 1769,1360 1720,1330" fill="#8f5038"/>
<polygon points="1769,1348 1827,1322 1827,1334 1769,1360" fill="#a05c40"/>
<polygon points="1720,1317 1779,1290 1827,1322 1769,1348" fill="#c98a6a"/>
<line x1="1745" y1="1332" x2="1803" y2="1306" stroke="#b0704f" stroke-width="2"/>
<rect x="1727" y="1328" width="14" height="32" fill="#6e3a28"/><rect x="1760" y="1352" width="12" height="10" fill="#6f3a27"/>
<polygon points="1600,1508 1795,1648 1853,1623 2034,1488 2133,1424 2110,1380 1990,1360 1700,1420" fill="#55575e"/>
<polygon points="2011,1584 2101,1627 2160,1600 2120,1560 2060,1550" fill="#5a5c63"/>
<polygon points="1682,1440 1720,1458 1720,1517 1690,1522 1682,1505" fill="#5e3022"/>
<polygon points="1705,1470 1797,1525 1797,1548 1705,1492" fill="#4a2a22"/>
<polygon points="2086,1352 2136,1338 2136,1427 2110,1435 2086,1420" fill="#6e3826"/>
<polygon points="1795,1540 1853,1545 1853,1618 1821,1623 1795,1600" fill="#6e3826"/><polygon points="1821,1548 1853,1545 1853,1618 1821,1623" fill="#8a4a32"/>
<polygon points="1658,1408 1821,1536 1821,1553 1664,1424" fill="#8e5038"/>
<polygon points="1821,1536 2165,1329 2165,1347 1821,1553" fill="#a7654a"/>
<polygon points="1658,1408 1996,1245 2165,1329 1821,1536" fill="url(#tabletop)"/>
<g stroke="#b77656" stroke-width="2.2"><line x1="1695" y1="1440" x2="2036" y2="1264"/><line x1="1735" y1="1470" x2="2080" y2="1287"/><line x1="1780" y1="1504" x2="2124" y2="1308"/></g>
<polygon points="2042,1537 2120,1590 2120,1608 2042,1555" fill="#8a4a32"/>
<polygon points="2120,1590 2182,1543 2182,1560 2120,1608" fill="#a05c40"/>
<polygon points="2042,1537 2104,1493 2182,1543 2120,1590" fill="#c98a6a"/>
<line x1="2075" y1="1512" x2="2152" y2="1566" stroke="#b0704f" stroke-width="2"/>
<rect x="2048" y="1553" width="30" height="38" fill="#6e3a28"/><rect x="2096" y="1598" width="32" height="33" fill="#7a3f2b"/><rect x="2158" y="1555" width="22" height="40" fill="#6f3a27"/>
<path d="M1961,1010 Q1955,1075 1975,1135 Q2032,1150 2090,1135 Q2110,1075 2103,1010 Q2032,985 1961,1010Z" fill="#8e4f34"/>
<ellipse cx="2032" cy="1005" rx="70" ry="27" fill="#b06c4a"/><ellipse cx="2032" cy="1005" rx="52" ry="18" fill="#9a5a3c"/>
<path d="M1958,1050 Q2032,1075 2106,1050 L2106,1064 Q2032,1090 1958,1064Z" fill="#a9b1b8"/><path d="M1963,1105 Q2032,1128 2100,1105 L2098,1119 Q2032,1142 1966,1119Z" fill="#a9b1b8"/>
<path d="M1885,1100 L1885,1170 Q1922,1185 1960,1170 L1960,1100Z" fill="#8a4c33"/><ellipse cx="1922" cy="1098" rx="40" ry="16" fill="#b06c4a"/>
<path d="M1882,1112 Q1922,1128 1963,1112 L1963,1122 Q1922,1138 1882,1122Z" fill="#a9b1b8"/><path d="M1884,1150 Q1922,1166 1961,1150 L1961,1160 Q1922,1176 1884,1160Z" fill="#a9b1b8"/>
<polygon points="2134.7,1052.8 2187.2,1023.0 2232.7,1042.0 2232.7,1068.5 2213.8,1087.5 2161.3,1117.2" fill="#b06f4e"/>
<line x1="2171.6" y1="1038.4" x2="2189.1" y2="1104.9" stroke="#b5bdc4" stroke-width="7.7"/>
<polygon points="2180.3,1098.4 2161.4,1117.3 2134.6,1117.3 2115.7,1098.4 2115.7,1071.6 2134.6,1052.7 2161.4,1052.7 2180.3,1071.6" fill="#7e4530" stroke="#b5bdc4" stroke-width="6.3"/>
<polygon points="2168.0,1093.3 2156.3,1105.0 2139.7,1105.0 2128.0,1093.3 2128.0,1076.7 2139.7,1065.0 2156.3,1065.0 2168.0,1076.7" fill="#5e3020"/>
<polygon points="2285.8,1102.2 2345.8,1068.2 2397.8,1089.8 2397.8,1120.2 2376.2,1141.8 2316.2,1175.8" fill="#b06f4e"/>
<line x1="2328.0" y1="1085.7" x2="2348.0" y2="1161.7" stroke="#b5bdc4" stroke-width="8.8"/>
<polygon points="2338.0,1154.3 2316.3,1176.0 2285.7,1176.0 2264.0,1154.3 2264.0,1123.7 2285.7,1102.0 2316.3,1102.0 2338.0,1123.7" fill="#7e4530" stroke="#b5bdc4" stroke-width="7.2"/>
<polygon points="2323.9,1148.5 2310.5,1161.9 2291.5,1161.9 2278.1,1148.5 2278.1,1129.5 2291.5,1116.1 2310.5,1116.1 2323.9,1129.5" fill="#5e3020"/>
<polygon points="2094.5,1109.6 2144.0,1081.6 2186.9,1099.4 2186.9,1124.5 2169.0,1142.3 2119.5,1170.4" fill="#b06f4e"/>
<line x1="2129.3" y1="1096.0" x2="2145.8" y2="1158.7" stroke="#b5bdc4" stroke-width="7.3"/>
<polygon points="2137.5,1152.6 2119.6,1170.5 2094.4,1170.5 2076.5,1152.6 2076.5,1127.4 2094.4,1109.5 2119.6,1109.5 2137.5,1127.4" fill="#7e4530" stroke="#b5bdc4" stroke-width="5.9"/>
<polygon points="2125.9,1147.8 2114.8,1158.9 2099.2,1158.9 2088.1,1147.8 2088.1,1132.2 2099.2,1121.1 2114.8,1121.1 2125.9,1132.2" fill="#5e3020"/>
<polygon points="2158.3,1127.9 2212.3,1097.3 2259.1,1116.7 2259.1,1144.1 2239.7,1163.5 2185.7,1194.1" fill="#b06f4e"/>
<line x1="2196.3" y1="1113.0" x2="2214.3" y2="1181.4" stroke="#b5bdc4" stroke-width="7.9"/>
<polygon points="2205.3,1174.8 2185.8,1194.3 2158.2,1194.3 2138.7,1174.8 2138.7,1147.2 2158.2,1127.7 2185.8,1127.7 2205.3,1147.2" fill="#7e4530" stroke="#b5bdc4" stroke-width="6.5"/>
<polygon points="2192.6,1169.5 2180.5,1181.6 2163.5,1181.6 2151.4,1169.5 2151.4,1152.5 2163.5,1140.4 2180.5,1140.4 2192.6,1152.5" fill="#5e3020"/>
<polygon points="2234.9,1159.0 2290.4,1127.5 2338.5,1147.5 2338.5,1175.6 2318.6,1195.6 2263.1,1227.0" fill="#b06f4e"/>
<line x1="2274.0" y1="1143.7" x2="2292.5" y2="1214.0" stroke="#b5bdc4" stroke-width="8.1"/>
<polygon points="2283.2,1207.2 2263.2,1227.2 2234.8,1227.2 2214.8,1207.2 2214.8,1178.8 2234.8,1158.8 2263.2,1158.8 2283.2,1178.8" fill="#7e4530" stroke="#b5bdc4" stroke-width="6.7"/>
<polygon points="2270.2,1201.8 2257.8,1214.2 2240.2,1214.2 2227.8,1201.8 2227.8,1184.2 2240.2,1171.8 2257.8,1171.8 2270.2,1184.2" fill="#5e3020"/>
<polygon points="2308.6,1181.0 2365.6,1148.7 2415.0,1169.3 2415.0,1198.1 2394.4,1218.7 2337.4,1251.0" fill="#b06f4e"/>
<line x1="2348.7" y1="1165.4" x2="2367.7" y2="1237.6" stroke="#b5bdc4" stroke-width="8.4"/>
<polygon points="2358.1,1230.5 2337.5,1251.1 2308.5,1251.1 2287.9,1230.5 2287.9,1201.5 2308.5,1180.9 2337.5,1180.9 2358.1,1201.5" fill="#7e4530" stroke="#b5bdc4" stroke-width="6.8"/>
<polygon points="2344.8,1225.0 2332.0,1237.8 2314.0,1237.8 2301.2,1225.0 2301.2,1207.0 2314.0,1194.2 2332.0,1194.2 2344.8,1207.0" fill="#5e3020"/>
<g stroke-width="4"><line x1="1824" y1="1145" x2="1824" y2="950" stroke="#a6df3e"/><line x1="1824" y1="1145" x2="1973" y2="1210" stroke="#ee5a70"/><line x1="1824" y1="1145" x2="1652" y2="1204" stroke="#5ba4f4"/></g>
<polygon points="1824,935 1837,942 1837,958 1824,965 1811,958 1811,942" fill="#a6df3e"/>
<polygon points="1975,1193 1988,1200 1988,1216 1975,1223 1962,1216 1962,1200" fill="#ee5a70"/>
<polygon points="1652,1188 1665,1195 1665,1211 1652,1218 1639,1211 1639,1195" fill="#5ba4f4"/>
<polygon points="1771,1094 1791,1088 1791,1118 1771,1124" fill="#ee5a70"/>
<polygon points="1852,1088 1871,1098 1871,1128 1852,1118" fill="#5ba4f4"/>
<polygon points="1800,1180 1824,1171 1848,1180 1824,1189" fill="#a6df3e"/>
</g>
<rect x="951.5" y="245.5" width="1746" height="1799" fill="none" stroke="#7499dc" stroke-width="3"/>
<rect x="966" y="260" width="172" height="44" rx="5" fill="#d4d6db" fill-opacity="0.75"/>
<g fill="#444"><circle cx="986" cy="271" r="3.2"/><circle cx="986" cy="282" r="3.2"/><circle cx="986" cy="293" r="3.2"/></g>
</svg>
<div class="t" style="left:1003.5px;top:270.5px;color:#333">Perspective</div>
<svg style="left:0;top:0" width="3676" height="2257">
<g stroke-width="3"><line x1="2614" y1="328" x2="2614" y2="281" stroke="#8fcc40"/><line x1="2614" y1="328" x2="2647" y2="344" stroke="#e0506a"/><line x1="2614" y1="328" x2="2576" y2="341" stroke="#4a8ee0"/></g>
<circle cx="2581" cy="311.5" r="12" fill="#a34b58" stroke="#d87a8a" stroke-width="2.5"/><circle cx="2653" cy="313.5" r="12" fill="#4371ad" stroke="#6fa0e6" stroke-width="2.5"/><circle cx="2614" cy="373.5" r="12" fill="#729a32" stroke="#a6d85a" stroke-width="2.5"/>
<circle cx="2614" cy="281.5" r="13.5" fill="#9acd48"/><circle cx="2647" cy="344" r="13.5" fill="#e05268"/><circle cx="2576" cy="341.5" r="13.5" fill="#5590e8"/>
<g font-family="Liberation Sans" font-size="19" fill="#111" text-anchor="middle"><text x="2614" y="288.5">Y</text><text x="2647.5" y="351">X</text><text x="2576" y="348.5">Z</text></g>
</svg>
<!--/VP-->
<!-- palette -->
<div class="a" style="left:2699px;top:244px;width:404px;height:1802px;background:#e4e4e4"></div>
<div class="a" style="left:2713px;top:337px;width:389px;height:1709px;background:#f7f7f7;border-radius:5px 5px 0 0"></div>

<!-- palette header -->
<div class="a" style="left:2713px;top:250.5px;width:281px;height:46px;background:#f7f7f7;border-radius:5px 5px 0 0;border-bottom:3.5px solid #fff"></div>
<div class="t" style="left:2724px;top:163px;color:#5a5a5a;top:262px">Filter Meshes</div>
<svg style="left:0;top:0" width="1" height="1">
 <g fill="none" stroke="#555" stroke-width="3.3"><circle cx="2968" cy="271" r="7.5"/><path d="M2973.5 276.5l7.5 7.5" stroke-width="3.8"/></g>
 <g fill="#4a8cf0"><rect x="3015" y="263" width="8" height="8"/><rect x="3027" y="263" width="8" height="8"/><rect x="3015" y="275" width="8" height="8"/><rect x="3027" y="275" width="8" height="8"/></g>
 <g fill="#555"><rect x="3069" y="263" width="4" height="4"/><rect x="3069" y="271" width="4" height="4"/><rect x="3069" y="279" width="4" height="4"/><rect x="3076" y="263" width="14" height="4"/><rect x="3076" y="271" width="14" height="4"/><rect x="3076" y="279" width="14" height="4"/></g>
 <rect x="2713" y="312.5" width="389" height="7" rx="3.5" fill="#fff"/>
 <rect x="2713" y="312.5" width="90" height="7" rx="3.5" fill="#9e9e9e"/>
 <circle cx="2802.7" cy="316" r="10.5" fill="#e6e6e6" stroke="#c4c4c4" stroke-width="2"/>
 <circle cx="2802.7" cy="316" r="5.3" fill="#555"/>
 <rect x="3089.5" y="350" width="7" height="1693" rx="3.5" fill="#ececec"/>
 <rect x="3089.5" y="1515.7" width="7" height="158" rx="3.5" fill="#c9c9c9"/>
 <g stroke="#ebebeb" stroke-width="1.5"><path d="M2720 348.5h349M2720 524h349M2720 729h349M2720 904.6h349M2720 1110h349M2720 1315h349M2720 1520h349M2720 1725h349M2720 1930h349"/></g>
</svg>
<div class="a" style="left:2897.6px;top:905.4px;width:183.5px;height:204.6px;background:#c8d8f6;border-radius:6px"></div>
<div class="t" style="left:2650px;width:300px;text-align:center;top:485.0px;color:#3c3c3c">stairs_narrow</div>
<div class="t" style="left:2834px;width:300px;text-align:center;top:485.0px;color:#3c3c3c">stairs_wall_left</div>
<div class="t" style="left:2650px;width:300px;text-align:center;top:660.0px;color:#3c3c3c">stairs_wall_rig</div>
<div class="t" style="left:2650px;width:300px;text-align:center;top:689.5px;color:#3c3c3c">ht</div>
<div class="t" style="left:2834px;width:300px;text-align:center;top:660.0px;color:#3c3c3c">stairs_walled</div>
<div class="t" style="left:2650px;width:300px;text-align:center;top:865.6px;color:#3c3c3c">stairs_wide</div>
<div class="t" style="left:2834px;width:300px;text-align:center;top:865.6px;color:#3c3c3c">stairs_wood</div>
<div class="t" style="left:2650px;width:300px;text-align:center;top:1040.0px;color:#3c3c3c">stairs_wood_d</div>
<div class="t" style="left:2650px;width:300px;text-align:center;top:1069.5px;color:#3c3c3c">ecorated</div>
<div class="t" style="left:2834px;width:300px;text-align:center;top:1040.0px;color:#1e1e1e">stool</div>
<div class="t" style="left:2650px;width:300px;text-align:center;top:1246.0px;color:#3c3c3c">sword_shield</div>
<div class="t" style="left:2834px;width:300px;text-align:center;top:1246.0px;color:#3c3c3c">sword_shield_</div>
<div class="t" style="left:2834px;width:300px;text-align:center;top:1275.5px;color:#3c3c3c">broken</div>
<div class="t" style="left:2650px;width:300px;text-align:center;top:1451.0px;color:#3c3c3c">sword_shield_</div>
<div class="t" style="left:2650px;width:300px;text-align:center;top:1480.5px;color:#3c3c3c">gold</div>
<div class="t" style="left:2834px;width:300px;text-align:center;top:1451.0px;color:#3c3c3c">table_long</div>
<div class="t" style="left:2650px;width:300px;text-align:center;top:1656.6px;color:#3c3c3c">table_long_br</div>
<div class="t" style="left:2650px;width:300px;text-align:center;top:1686.1px;color:#3c3c3c">oken</div>
<div class="t" style="left:2834px;width:300px;text-align:center;top:1656.6px;color:#3c3c3c">table_long_de</div>
<div class="t" style="left:2834px;width:300px;text-align:center;top:1686.1px;color:#3c3c3c">corated_A</div>
<div class="t" style="left:2650px;width:300px;text-align:center;top:1861.0px;color:#3c3c3c">table_long_de</div>
<div class="t" style="left:2650px;width:300px;text-align:center;top:1890.5px;color:#3c3c3c">corated_C</div>
<div class="t" style="left:2834px;width:300px;text-align:center;top:1861.0px;color:#3c3c3c">table_long_tab</div>
<div class="t" style="left:2834px;width:300px;text-align:center;top:1890.5px;color:#3c3c3c">lecloth</div>


<svg style="left:0;top:0" width="3676" height="2257">
<defs>
 <symbol id="i-stairs" viewBox="0 0 100 100" preserveAspectRatio="none">
  <path d="M0 85L38 1h9v17l38 8V12h15v63L64 99H58L0 85z" fill="#80878c"/>
  <path d="M10 86L47 18l38 8L58 99z" fill="#8d9499"/>
  <g stroke="#4c5257" stroke-width="4.5"><path d="M43 28l38 9M39 37l38 9M35 46l38 9M31 55l38 9M27 64l38 9M23 73l38 9M19 82l38 9"/></g>
  <path d="M0 85L38 1h9L10 86z" fill="#858c91"/>
  <path d="M85 12h15v63L64 99l21-70z" fill="#747b80"/>
  <path d="M0 80h10v10H0zM55 90h10v9H55z" fill="#3a3f43"/>
 </symbol>
 <symbol id="i-wstairs" viewBox="0 0 100 100" preserveAspectRatio="none">
  <path d="M45 0l50 12v12l-35 70-58-20 43-74z" fill="#a25f40"/>
  <g stroke="#6e3b27" stroke-width="5"><path d="M40 12l50 12M34 24l48 12M28 36l46 12M22 48l44 12M16 60l42 12M10 72l40 12"/></g>
  <path d="M0 74l58 20v6L0 80z" fill="#7a4530"/>
  <path d="M86 22v62M70 50v44" stroke="#7a4530" stroke-width="8"/>
 </symbol>
 <symbol id="i-block" viewBox="0 0 100 100" preserveAspectRatio="none">
  <path d="M0 15L40 0l60 15v62L62 100 0 84z" fill="#4f565b"/>
  <path d="M0 15L40 0l15 4L15 20z" fill="#6b7378"/>
  <path d="M5 22L62 38v62L5 84z" fill="#7c8489"/>
  <g stroke="#4a5055" stroke-width="5"><path d="M8 34l52 15M8 46l52 15M8 58l52 15M8 70l52 15"/></g>
  <path d="M62 38l38-23v62L62 100z" fill="#889095"/>
  <path d="M0 15l15-4 47 16-5 14L0 24zM62 27l38-12v9L62 40z" fill="#393e42"/>
 </symbol>
 <symbol id="i-wall" viewBox="0 0 100 100" preserveAspectRatio="none">
  <path d="M0 68l35-22V4l8-4 57 14v49l-40 37L0 84z" fill="#4b5257"/>
  <path d="M60 32l40-18v49l-40 37z" fill="#7b8388"/>
  <path d="M35 4l8-4 57 14v9L60 35 35 25z" fill="#2f3437"/>
  <path d="M0 84l60 16v-5L0 79z" fill="#3c4246"/>
 </symbol>
 <symbol id="i-wleft" viewBox="0 0 100 100" preserveAspectRatio="none">
  <path d="M0 15L40 0l60 15v67L58 100 0 85z" fill="#555c61"/>
  <path d="M0 15l58 85h10L10 8z" fill="#9ca4a9"/>
  <g stroke="#6d7479" stroke-width="3"><path d="M12 20l10-6M20 32l10-6M28 44l10-6M36 56l10-6M44 68l10-6M52 80l10-6"/></g>
  <path d="M40 0l60 15v12L42 12z" fill="#33383c"/>
  <path d="M68 100l32-18v-8L62 92z" fill="#6a7176"/>
  <path d="M0 85l58 15v-6L0 79z" fill="#3c4246"/>
 </symbol>
<symbol id="i-mtable" viewBox="0 0 100 100" preserveAspectRatio="none">
  <path d="M0 38l37-38 63 20-37 40z" fill="#a9633f"/>
  <path d="M0 38l63 22v10L0 48zM63 60l37-40v10L63 70z" fill="#7a402a"/>
  <path d="M6 45h14v35H6zM50 62h16v38H50zM84 30h12v32H84z" fill="#6e3a26"/>
  <path d="M20 62l30 12v8L20 70z" fill="#6e3a26"/>
 </symbol>
 <symbol id="i-decoonly" viewBox="0 0 100 100" preserveAspectRatio="none">
  <ellipse cx="48" cy="22" rx="14" ry="12" fill="#8d8f90"/><circle cx="75" cy="10" r="9" fill="#b85a30"/><ellipse cx="48" cy="48" rx="10" ry="6" fill="#999"/><path d="M30 30h6v15h-6zM63 10h5v15h-5z" fill="#4c9a6a"/>
 </symbol>
 <symbol id="i-table" viewBox="0 0 100 100" preserveAspectRatio="none">
  <path d="M0 55l75-55 25 18-75 55z" fill="#a9633f"/>
  <path d="M0 55l25 18v8l-25-18zM25 73l75-55v8l-75 55z" fill="#7a402a"/>
  <path d="M5 65h10v25h-10zM30 78h10v22h-10zM85 25h10v25h-10z" fill="#6e3a26"/>
 </symbol>
 <symbol id="i-stool" viewBox="0 0 100 100" preserveAspectRatio="none">
  <path d="M0 35l40-35 60 20-35 30z" fill="#a9633f"/>
  <path d="M0 35l65 15v12l-65-15zM65 50l35-30v12l-35 30z" fill="#8a4c32"/>
  <path d="M5 45h18v50h-18zM55 58h20v42h-20zM80 35h15v35h-15z" fill="#7a402a"/>
 </symbol>
 <symbol id="i-shield" viewBox="0 0 100 100" preserveAspectRatio="none">
  <path d="M8 5l80 85M92 35l-80 50" stroke="#6b7074" stroke-width="9"/>
  <path d="M25 35q25-15 50 0v30q-10 25-25 35-15-10-25-35z" fill="#7b7f83"/>
  <path d="M31 40q19-11 38 0v24q-8 20-19 28-11-8-19-28z" fill="#7a3a2a"/>
  <path d="M50 33v62M28 55h44" stroke="#7b7f83" stroke-width="6"/>
 </symbol>
 <symbol id="i-gshield" viewBox="0 0 100 100" preserveAspectRatio="none">
  <path d="M8 5l80 85M92 35l-80 50" stroke="#b07a3a" stroke-width="9"/>
  <path d="M25 35q25-15 50 0v30q-10 25-25 35-15-10-25-35z" fill="#d9a63c"/>
  <path d="M31 40q19-11 38 0v24q-8 20-19 28-11-8-19-28z" fill="#8a2020"/>
  <path d="M50 33v62M28 55h44" stroke="#d9a63c" stroke-width="6"/>
 </symbol>
 <symbol id="i-deco" viewBox="0 0 100 100" preserveAspectRatio="none">
  <path d="M0 55l75-55 25 18-75 55z" fill="#a9633f"/>
  <path d="M0 55l25 18v8l-25-18zM25 73l75-55v8l-75 55z" fill="#7a402a"/>
  <path d="M5 65h10v25h-10zM30 78h10v22h-10zM85 25h10v25h-10z" fill="#6e3a26"/>
  <ellipse cx="50" cy="20" rx="14" ry="10" fill="#8d8f90"/><circle cx="75" cy="10" r="9" fill="#b85a30"/><ellipse cx="45" cy="45" rx="10" ry="6" fill="#999"/><path d="M30 30h6v15h-6z" fill="#4c8a5a"/>
 </symbol>
 <symbol id="i-barrels" viewBox="0 0 100 100" preserveAspectRatio="none">
  <path d="M0 70l75-45 25 18-75 45z" fill="#a9633f"/>
  <path d="M5 78h10v22h-10zM30 88h10v12h-10zM85 45h10v20h-10z" fill="#6e3a26"/>
  <ellipse cx="40" cy="40" rx="22" ry="18" fill="#9a5638"/><ellipse cx="70" cy="20" rx="18" ry="16" fill="#9a5638"/>
  <path d="M30 25v30M50 22v32M62 8v26M78 6v26" stroke="#8a8f93" stroke-width="5"/>
  <path d="M40 60h10v15h-10z" fill="#4c8a5a"/>
 </symbol>
 <symbol id="i-cloth" viewBox="0 0 100 100" preserveAspectRatio="none">
  <path d="M0 55l75-55 25 18-75 55z" fill="#a9633f"/>
  <path d="M20 68l70-55 8 6-70 55z" fill="#e8e2dc"/>
  <path d="M0 55l25 18v8l-25-18zM25 73l75-55v8l-75 55z" fill="#7a402a"/>
  <path d="M5 65h10v25h-10zM30 78h10v22h-10zM85 25h10v25h-10z" fill="#6e3a26"/>
 </symbol>
</defs>
<use href="#i-stairs" x="2765" y="364" width="81" height="108"/>
<use href="#i-wleft" x="2946" y="377" width="86" height="95"/>
<use href="#i-wall" x="2763" y="552" width="85" height="95"/>
<use href="#i-block" x="2936" y="539" width="106" height="108"/>
<use href="#i-stairs" x="2752" y="746" width="109" height="105"/>
<use href="#i-wstairs" x="2944" y="746" width="89" height="105"/>
<use href="#i-wstairs" x="2761.5" y="920.5" width="89" height="105"/>
<use href="#i-stool" x="2936" y="924" width="106" height="98"/>
<use href="#i-shield" x="2757.5" y="1127" width="100" height="91"/>
<use href="#i-shield" x="2960" y="1127" width="60" height="95"/>
<use href="#i-gshield" x="2757" y="1332" width="100" height="92"/>
<use href="#i-table" x="2934" y="1339" width="109" height="89"/>
<use href="#i-table" x="2763.5" y="1554" width="95" height="76"/>
<use href="#i-deco" x="2934" y="1554" width="109" height="87"/>
<use href="#i-barrels" x="2762" y="1755" width="87" height="91"/>
<use href="#i-cloth" x="2934" y="1749" width="109" height="88"/>
<use href="#i-cloth" x="2753.5" y="1964" width="105" height="82"/><use href="#i-decoonly" x="2753.5" y="1964" width="105" height="82"/>
<use href="#i-mtable" x="2934" y="1955" width="109" height="86"/>
</svg>

<!-- bottom panel -->
<div class="a" style="left:950px;top:2060px;width:2152px;height:64px;background:#e4e4e4;border-radius:6px"></div>


<svg style="left:0;top:0" width="1" height="1"><circle cx="973.3" cy="2094.3" r="7.2" fill="#c4614f"/>
 <path d="M2851 2101c3-2 3-5 4-10a8 8 0 0 1 12 2c1 5 2 8 4 10z" fill="#9a9a9a" transform="rotate(-20 2860 2095)"/><circle cx="2858" cy="2106" r="2.5" fill="#9a9a9a"/>
</svg>
<div class="t" style="left:983.5px;top:2083px;color:#3c3c3c">Output</div>
<div class="t" style="left:1090px;top:2083px;color:#3c3c3c">Debugger</div>
<div class="t" style="left:1228px;top:2083px;color:#3c3c3c">Audio</div>
<div class="t" style="left:1320px;top:2083px;color:#3c3c3c">Animation</div>
<div class="t" style="left:1461px;top:2083px;color:#3c3c3c">Shader Editor</div>
<div class="t" style="left:2889.5px;top:2083px;color:#8e8e8e">4.1.1.stable.mono</div>

<!-- ===== RIGHT DOCK: Inspector ===== -->
<div class="a" style="left:3117px;top:135px;width:457px;height:1989px;background:#e4e4e4;border-radius:6px"></div>
<div class="a" style="left:3259px;top:135px;width:315px;height:46px;background:#f7f7f7;border-radius:0 6px 0 0"></div>
<div class="a" style="left:3117px;top:135px;width:142px;height:3px;background:#6b9bf0"></div>
<div class="t" style="left:3136px;top:149px;color:#3a3a3a">Inspector</div>
<div class="t g" style="left:3279px;top:149px">Node</div>
<div class="t g" style="left:3376px;top:149px">History</div>
<div class="a" style="left:3123px;top:346px;width:444px;height:1772px;background:#fafafa;border-radius:5px"></div>

<svg style="left:0;top:0" width="1" height="1">
 <g fill="#b4b4b4"><circle cx="3560" cy="147" r="3.2"/><circle cx="3560" cy="158" r="3.2"/><circle cx="3560" cy="168.5" r="3.2"/></g>
 <path d="M3137 201.5h12l6 6v7h-6v9h-12z" fill="#555"/><path d="M3149 201.5v6h6" fill="#e4e4e4"/><path d="M3153.5 211.5v12M3147.5 217.5h12" stroke="#5fa04e" stroke-width="3.6"/>
 <path d="M3189.5 205a2 2 0 0 1 2-2h6.5l2.5 2.5h8.5a2 2 0 0 1 2 2v3h-16l-5 12.5z" fill="#555"/><path d="M3194 211h19l-4.5 12.5h-19z" fill="#555"/>
 <path d="M3243 203a2 2 0 0 1 2-2h15l7 7v15a2 2 0 0 1-2 2h-20a2 2 0 0 1-2-2z" fill="#b4b4b4"/><rect x="3248" y="201" width="11" height="7" fill="#e4e4e4"/><circle cx="3255" cy="217" r="3.5" fill="#e4e4e4"/>
 <g fill="#555"><circle cx="3310" cy="201.5" r="3.3"/><circle cx="3310" cy="213.2" r="3.3"/><circle cx="3310" cy="224.5" r="3.3"/></g>
 <path d="M3460 202l-7 11.5 7 11.5" fill="none" stroke="#555" stroke-width="3"/>
 <path d="M3492 202l7 11.5-7 11.5" fill="none" stroke="#aaa" stroke-width="3"/>
 <g fill="none" stroke="#555" stroke-width="3.2"><path d="M3537 213.5a9.5 9.5 0 1 1 3 7"/><path d="M3546.5 208v6h4"/></g><path d="M3533 211l4 5.5 4.5-5z" fill="#555"/>
</svg>
<div class="a" style="left:3123.5px;top:243px;width:389.5px;height:43.5px;background:#f7f7f7;border-radius:5px"></div>
<svg style="left:0;top:0" width="1" height="1">
 <g><path d="M3143.5 253l-10 5.5v12l10 5.8 10.5-5.8v-4.5l-6.5-3.5v3l-4 2.3-4-2.3v-6.5l4-2.3 4 2.3v-3z" fill="#c43f3b"/><circle cx="3151" cy="259.5" r="3.2" fill="#c43f3b"/></g>
 <path d="M3485 261l8 8 8-8" fill="none" stroke="#444" stroke-width="3.4"/>
 <g fill="none" stroke="#555" stroke-width="3"><circle cx="3544" cy="258.5" r="5"/><path d="M3539 263l-4 4"/></g>
 <text x="3529" y="278" font-family="Liberation Sans" font-weight="700" font-size="11" fill="#555">DOC</text>
</svg>
<div class="t" style="left:3171px;top:254px;color:#3c3c3c">GridMap2</div>
<div class="a" style="left:3123.5px;top:293.5px;width:389.5px;height:46px;background:#f7f7f7;border-radius:5px 5px 0 0;border-bottom:3px solid #fff"></div>
<div class="t" style="left:3134.5px;top:304px;color:#5a5a5a">Filter Properties</div>
<svg style="left:0;top:0" width="1" height="1">
 <g fill="none" stroke="#555" stroke-width="3.3"><circle cx="3487.5" cy="313" r="7.5"/><path d="M3493 318.5l7.5 7.5" stroke-width="3.8"/></g>
 <path d="M3537 305v16M3551 305v23M3547 305v5a4 4 0 0 0 8 0v-5" fill="none" stroke="#555" stroke-width="3"/><rect x="3533" y="318" width="8" height="10" rx="3" fill="#555"/>
</svg>
<!-- property sections -->
<div class="a" style="left:3130px;top:353px;width:430.6px;height:36.8px;background:#d9d9d9;border-radius:5px"></div>
<div class="a" style="left:3130px;top:491.5px;width:431px;height:335.5px;background:#f2f2f2"></div>
<div class="a" style="left:3130px;top:604px;width:431px;height:37px;background:#d9d9d9;border-radius:5px"></div>
<div class="a" style="left:3130px;top:715.6px;width:431px;height:37.2px;background:#d9d9d9;border-radius:5px"></div>
<svg style="left:0;top:0" width="1" height="1">
 <g><path d="M3288.5 360l-10 5.5v12l10 5.8 10.5-5.8v-4.5l-6.5-3.5v3l-4 2.3-4-2.3v-6.5l4-2.3 4 2.3v-3z" fill="#c43f3b"/><circle cx="3296" cy="366.5" r="3.2" fill="#c43f3b"/></g>
 <g fill="none" stroke="#444" stroke-width="3"><path d="M3322.5 409a8.5 8.5 0 1 1 3.5 9"/></g><path d="M3316 406l5.5 7 5-6.5z" fill="#444"/>
 <g transform="translate(3197 -1001)"><path d="M160 1405h20M160 1405v20M160 1425h6M180 1405v7M168 1405l8 10M171 1418v7h9v-9" fill="none" stroke="#f0a830" stroke-width="3.8"/><circle cx="160" cy="1405" r="3.4" fill="#f0a830"/><circle cx="180" cy="1405" r="3.4" fill="#f0a830"/><circle cx="160" cy="1425" r="3.4" fill="#f0a830"/></g>
 <g fill="none" stroke="#666" stroke-width="2.6"><path d="M3532 411l6 6 6-6M3532 465l6 6 6-6M3532 849l6 6 6-6"/></g>
 <g fill="none" stroke="#777" stroke-width="2.4"><path d="M3141 505l5 5-5 5M3141 542l5 5-5 5M3141 579l5 5-5 5M3141 654l5 5-5 5M3141 691.5l5 5-5 5M3141 766l5 5-5 5M3141 803.5l5 5-5 5"/></g>
 <circle cx="3293" cy="622.5" r="8.2" fill="none" stroke="#c2413f" stroke-width="3.2"/>
 <circle cx="3308" cy="734" r="8.2" fill="none" stroke="#555" stroke-width="3.2"/>
</svg>
<div class="t b" style="left:3313px;top:360px;color:#333">GridMap</div>
<div class="t" style="left:3144px;top:402px;color:#5a5a5a">Mesh Library</div>
<div class="t" style="left:3386px;top:402px;color:#3c3c3c">3DTiles.tre</div>
<div class="t" style="left:3144px;top:456px;color:#5a5a5a">Physics Material</div>
<div class="t" style="left:3382px;top:456px;color:#3c3c3c">&lt;empty&gt;</div>
<div class="t b" style="left:3154.6px;top:498.5px;color:#333">Cell</div>
<div class="t b" style="left:3154.6px;top:535.7px;color:#333">Collision</div>
<div class="t b" style="left:3154.6px;top:573px;color:#333">Navigation</div>
<div class="t b" style="left:3317.5px;top:611px;color:#333">Node3D</div>
<div class="t b" style="left:3154.6px;top:648px;color:#333">Transform</div>
<div class="t b" style="left:3154.6px;top:685px;color:#333">Visibility</div>
<div class="t b" style="left:3333px;top:722.5px;color:#333">Node</div>
<div class="t b" style="left:3154.6px;top:759.5px;color:#333">Process</div>
<div class="t b" style="left:3154.6px;top:797px;color:#333">Editor Description</div>
<div class="t" style="left:3144px;top:840px;color:#5a5a5a">Script</div>
<div class="t" style="left:3382px;top:840px;color:#3c3c3c">&lt;empty&gt;</div>
<div class="a" style="left:3194px;top:882.3px;width:302px;height:46.7px;background:#e8e8e8;border-radius:6px"></div>
<svg style="left:0;top:0" width="1" height="1"><path d="M3217 894v24M3205 906h24" stroke="#444" stroke-width="3.4"/></svg>
<div class="t" style="left:3285.5px;top:894.5px;color:#3c3c3c">Add Metadata</div>

</body></html>
